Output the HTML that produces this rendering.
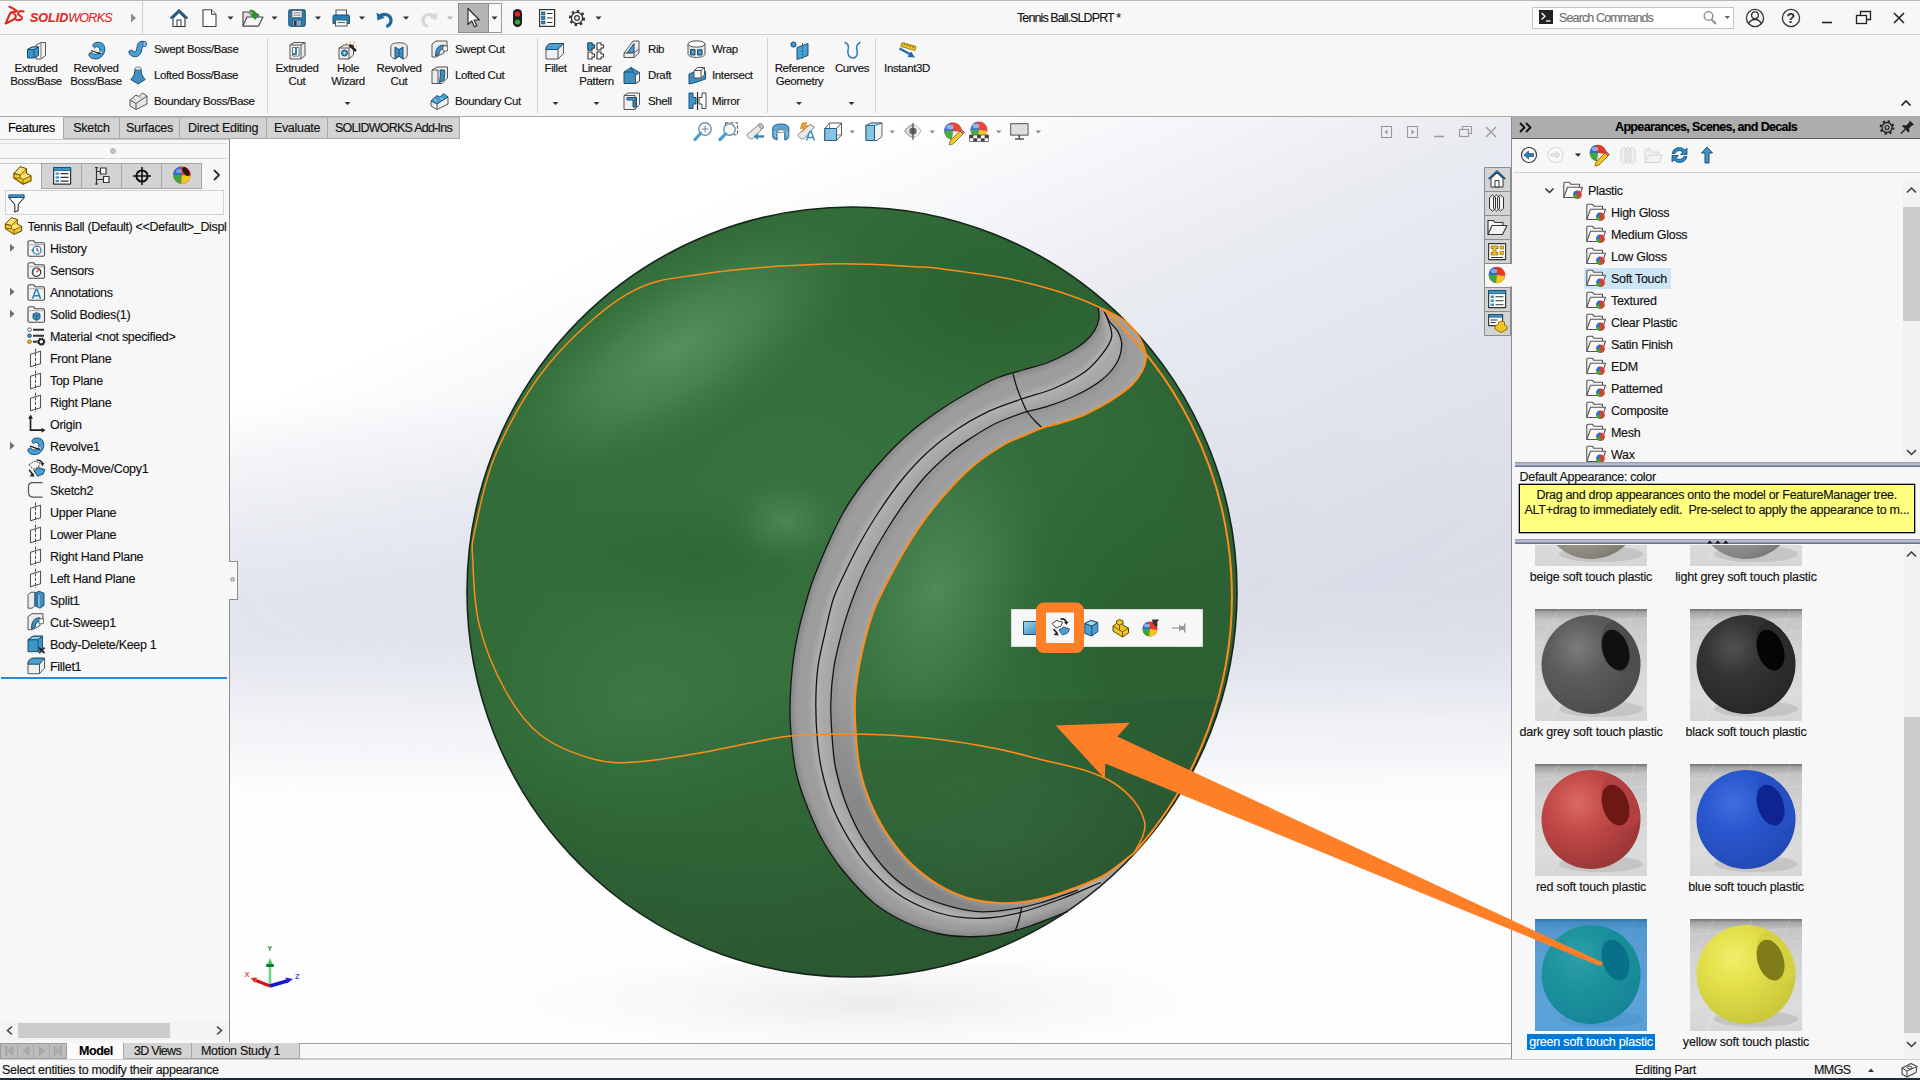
<!DOCTYPE html>
<html lang="en">
<head>
<meta charset="utf-8">
<title>Tennis Ball.SLDPRT - SOLIDWORKS</title>
<style>
*{box-sizing:border-box;margin:0;padding:0}
html,body{width:1920px;height:1080px;overflow:hidden;background:#f7f7f7}
body{position:relative;font-family:"Liberation Sans",sans-serif;font-size:12.5px;letter-spacing:-0.3px;color:#111;-webkit-text-stroke:0.14px currentColor}
.abs{position:absolute}
.t{position:absolute;white-space:pre;line-height:16px;height:16px}
.rb{font-size:11.5px;letter-spacing:-0.38px;color:#111}
.rbc{position:absolute;text-align:center;white-space:pre;line-height:13px;font-size:11.5px;letter-spacing:-0.38px;color:#111;transform:translateX(-50%)}
svg{position:absolute;overflow:visible}
.vsep{position:absolute;width:1px;background:#d4d4d4}
.dd{position:absolute;width:0;height:0;border-left:3px solid transparent;border-right:3px solid transparent;border-top:3px solid #333}
.tab{position:absolute;top:117px;height:22px;background:#d3d3d3;border:1px solid #a8a8a8;border-top:1px solid #b8b8b8;text-align:center;line-height:20px;font-size:12.5px;letter-spacing:-0.3px;color:#111}
.row{position:absolute;left:0;height:22px;width:228px;white-space:pre;line-height:22px}
.row span{position:absolute;top:0}
.tri{position:absolute;width:0;height:0;border-top:4px solid transparent;border-bottom:4px solid transparent;border-left:5px solid #6a6a6a}
</style>
</head>
<body>
<!-- ===== top line ===== -->
<div class="abs" style="left:0;top:0;width:1920px;height:1px;background:#b9b9b9"></div>
<!-- title bar -->
<div class="abs" style="left:0;top:1px;width:1920px;height:34px;background:#f7f7f7;border-bottom:1px solid #d0d0d0"></div>
<div class="abs" style="left:142px;top:1px;width:1px;height:33px;background:#d0d0d0"></div>
<!-- ribbon -->
<div class="abs" style="left:0;top:35px;width:1920px;height:82px;background:#f7f7f7;border-bottom:1px solid #a9a9a9"></div>
<!-- viewport background -->
<div id="vp" class="abs" style="left:230px;top:117px;width:1281px;height:926px;background:
linear-gradient(180deg, rgba(216,220,231,0) 30.5%, rgba(216,220,231,.3) 41%, rgba(216,220,231,.6) 52%, rgba(216,220,231,.6) 56.5%, rgba(216,220,231,.3) 63%, rgba(216,220,231,0) 73%),
#ffffff"></div>
<div class="abs" style="left:230px;top:117px;width:1281px;height:926px;background:linear-gradient(156deg, rgba(216,220,231,0) 20%, rgba(216,220,231,.3) 30%, rgba(216,220,231,.55) 38%, rgba(216,220,231,.72) 49%, rgba(216,220,231,.86) 59%, rgba(216,220,231,.96) 66%, rgba(216,220,231,1) 100%);-webkit-mask-image:linear-gradient(180deg,#000 0%,#000 51%,rgba(0,0,0,.25) 65%,rgba(0,0,0,.06) 74%,rgba(0,0,0,.03) 100%);mask-image:linear-gradient(180deg,#000 0%,#000 51%,rgba(0,0,0,.25) 65%,rgba(0,0,0,.06) 74%,rgba(0,0,0,.03) 100%)"></div>
<!-- floor shadow -->
<div class="abs" style="left:520px;top:965px;width:700px;height:85px;background:radial-gradient(ellipse 50% 60% at 50% 45%,rgba(222,222,226,0.55) 0%,rgba(232,232,236,0.3) 50%,rgba(255,255,255,0) 100%)"></div>
<!-- ===== ball ===== -->
<svg class="abs" style="left:0;top:0" width="1920" height="1080" viewBox="0 0 1920 1080">
<defs>
<radialGradient id="gbase" cx="0.42" cy="0.40" r="0.62"><stop offset="0" stop-color="#38733f"/><stop offset="0.7" stop-color="#316b38"/><stop offset="1" stop-color="#2c5f33"/></radialGradient>
<radialGradient id="h1" cx="0.5" cy="0.5" r="0.5"><stop offset="0" stop-color="#56935f" stop-opacity="0.95"/><stop offset="0.45" stop-color="#4c8956" stop-opacity="0.7"/><stop offset="1" stop-color="#3a7542" stop-opacity="0"/></radialGradient>
<radialGradient id="h2" cx="0.5" cy="0.5" r="0.5"><stop offset="0" stop-color="#4f8b58" stop-opacity="1"/><stop offset="0.5" stop-color="#458050" stop-opacity="0.6"/><stop offset="1" stop-color="#3a7542" stop-opacity="0"/></radialGradient>
<radialGradient id="dk" cx="0.5" cy="0.5" r="0.5"><stop offset="0" stop-color="#2a5f31" stop-opacity="0.9"/><stop offset="1" stop-color="#2a5f31" stop-opacity="0"/></radialGradient>
<linearGradient id="bandg" x1="0" y1="0" x2="1" y2="0"><stop offset="0" stop-color="#a6a6a6"/><stop offset="1" stop-color="#9a9a9a"/></linearGradient>
<clipPath id="ballclip"><circle cx="852" cy="592" r="385"/></clipPath>
</defs>
<circle cx="852" cy="592" r="385" fill="url(#gbase)"/>
<g clip-path="url(#ballclip)">
<ellipse cx="1000" cy="300" rx="200" ry="110" fill="url(#dk)"/>
<ellipse cx="1130" cy="640" rx="130" ry="200" fill="url(#dk)"/>
<ellipse cx="700" cy="560" rx="160" ry="70" fill="url(#dk)" opacity="0.6"/>
<ellipse cx="0" cy="0" rx="215" ry="88" fill="url(#h1)" transform="translate(676 350) rotate(-32)"/>
<ellipse cx="785" cy="521" rx="60" ry="45" fill="url(#h2)" opacity="0.85"/>
<ellipse cx="0" cy="0" rx="105" ry="185" fill="url(#h2)" transform="translate(936 590) rotate(16)"/>
<ellipse cx="640" cy="700" rx="200" ry="150" fill="url(#h2)" opacity="0.35"/>
<ellipse cx="1000" cy="830" rx="170" ry="110" fill="url(#h2)" opacity="0.3"/>
<linearGradient id="botdk" gradientUnits="userSpaceOnUse" x1="700" y1="700" x2="780" y2="980"><stop offset="0" stop-color="#2a5230" stop-opacity="0"/><stop offset="1" stop-color="#2a5230" stop-opacity=".55"/></linearGradient><rect x="460" y="700" width="800" height="290" fill="url(#botdk)"/>
</g>
<defs><clipPath id="bandclip"><path d="M1098.0 306.0C1098.2 308.0 1099.5 314.0 1099.0 318.0C1098.5 322.0 1097.3 326.1 1095.0 330.0C1092.7 333.9 1089.5 337.9 1085.0 341.7C1080.5 345.5 1074.4 349.4 1068.0 353.0C1061.6 356.6 1054.2 360.2 1046.7 363.0C1039.2 365.8 1031.3 367.5 1023.0 370.0C1014.7 372.5 1005.5 374.4 996.7 378.0C987.9 381.6 979.0 386.7 970.0 391.7C961.0 396.7 952.5 401.6 943.0 408.0C933.5 414.4 922.4 422.2 913.0 430.0C903.6 437.8 895.0 446.2 886.7 455.0C878.4 463.8 870.3 473.3 863.0 483.0C855.7 492.7 849.0 502.4 843.0 513.0C837.0 523.6 831.7 535.5 826.7 546.7C821.7 557.9 816.5 570.5 813.0 580.0C809.5 589.5 808.0 595.2 805.5 604.0C803.0 612.8 800.2 622.5 798.0 633.0C795.8 643.5 793.8 654.2 792.5 666.7C791.2 679.2 790.1 695.5 790.0 708.0C789.9 720.5 790.7 731.0 791.7 741.7C792.7 752.4 793.8 762.1 796.0 772.0C798.2 781.9 800.7 789.9 805.0 801.0C809.3 812.1 815.5 827.2 821.7 838.8C828.0 850.2 833.8 859.3 842.5 870.0C851.2 880.7 863.3 894.3 873.8 903.0C884.2 911.7 894.3 916.9 905.0 922.0C915.7 927.1 927.6 931.0 938.0 933.5C948.4 936.0 957.4 936.5 967.5 936.7C977.6 936.9 988.3 936.4 998.8 934.6C1009.2 932.8 1018.5 929.8 1030.0 926.0C1041.5 922.2 1061.2 914.1 1067.5 911.7A385 385 0 0 0 1134.0 853.0L1134.0 853.0C1128.8 856.8 1115.2 869.3 1103.0 876.0C1090.8 882.7 1073.2 888.8 1061.0 893.0C1048.8 897.2 1040.4 899.3 1030.0 901.0C1019.6 902.7 1009.2 903.5 998.8 903.0C988.3 902.5 977.6 901.1 967.5 898.0C957.4 894.9 947.8 890.6 938.0 884.6C928.2 878.6 917.7 870.4 909.0 861.7C900.3 853.0 892.6 842.6 886.0 832.5C879.4 822.4 873.9 811.4 869.6 801.0C865.3 790.6 862.3 781.3 860.0 770.0C857.7 758.7 856.6 744.7 855.8 733.0C855.0 721.3 854.5 711.0 855.0 700.0C855.5 689.0 857.0 677.9 859.0 666.7C861.0 655.5 863.9 643.3 866.7 633.0C869.5 622.7 872.1 614.4 876.0 605.0C879.9 595.6 884.9 586.4 890.0 576.7C895.1 567.0 900.6 556.7 906.7 546.7C912.8 536.7 919.2 526.7 926.7 516.7C934.2 506.7 943.4 495.6 951.7 486.7C960.0 477.8 967.8 470.1 976.7 463.0C985.6 455.9 997.5 448.4 1005.0 444.0C1012.5 439.6 1015.6 439.4 1021.7 436.7C1027.8 434.0 1035.3 430.3 1041.7 428.0C1048.1 425.7 1053.6 424.9 1060.0 423.0C1066.4 421.1 1073.0 419.6 1080.0 416.7C1087.0 413.8 1095.6 409.1 1101.7 405.8C1107.8 402.5 1111.7 400.2 1116.7 396.7C1121.7 393.2 1127.5 389.2 1131.7 385.0C1135.9 380.8 1139.3 376.2 1141.7 371.7C1144.1 367.2 1145.8 362.4 1146.0 358.0C1146.2 353.6 1144.6 349.2 1143.0 345.0C1141.4 340.8 1139.8 337.2 1136.5 333.0C1133.2 328.8 1129.1 324.0 1123.5 320.0C1117.9 316.0 1106.4 310.8 1103.0 309.0Z"/></clipPath><filter id="bl3" x="-20%" y="-20%" width="140%" height="140%"><feGaussianBlur stdDeviation="2.6"/></filter></defs>
<path d="M1098.0 306.0C1098.2 308.0 1099.5 314.0 1099.0 318.0C1098.5 322.0 1097.3 326.1 1095.0 330.0C1092.7 333.9 1089.5 337.9 1085.0 341.7C1080.5 345.5 1074.4 349.4 1068.0 353.0C1061.6 356.6 1054.2 360.2 1046.7 363.0C1039.2 365.8 1031.3 367.5 1023.0 370.0C1014.7 372.5 1005.5 374.4 996.7 378.0C987.9 381.6 979.0 386.7 970.0 391.7C961.0 396.7 952.5 401.6 943.0 408.0C933.5 414.4 922.4 422.2 913.0 430.0C903.6 437.8 895.0 446.2 886.7 455.0C878.4 463.8 870.3 473.3 863.0 483.0C855.7 492.7 849.0 502.4 843.0 513.0C837.0 523.6 831.7 535.5 826.7 546.7C821.7 557.9 816.5 570.5 813.0 580.0C809.5 589.5 808.0 595.2 805.5 604.0C803.0 612.8 800.2 622.5 798.0 633.0C795.8 643.5 793.8 654.2 792.5 666.7C791.2 679.2 790.1 695.5 790.0 708.0C789.9 720.5 790.7 731.0 791.7 741.7C792.7 752.4 793.8 762.1 796.0 772.0C798.2 781.9 800.7 789.9 805.0 801.0C809.3 812.1 815.5 827.2 821.7 838.8C828.0 850.2 833.8 859.3 842.5 870.0C851.2 880.7 863.3 894.3 873.8 903.0C884.2 911.7 894.3 916.9 905.0 922.0C915.7 927.1 927.6 931.0 938.0 933.5C948.4 936.0 957.4 936.5 967.5 936.7C977.6 936.9 988.3 936.4 998.8 934.6C1009.2 932.8 1018.5 929.8 1030.0 926.0C1041.5 922.2 1061.2 914.1 1067.5 911.7A385 385 0 0 0 1134.0 853.0L1134.0 853.0C1128.8 856.8 1115.2 869.3 1103.0 876.0C1090.8 882.7 1073.2 888.8 1061.0 893.0C1048.8 897.2 1040.4 899.3 1030.0 901.0C1019.6 902.7 1009.2 903.5 998.8 903.0C988.3 902.5 977.6 901.1 967.5 898.0C957.4 894.9 947.8 890.6 938.0 884.6C928.2 878.6 917.7 870.4 909.0 861.7C900.3 853.0 892.6 842.6 886.0 832.5C879.4 822.4 873.9 811.4 869.6 801.0C865.3 790.6 862.3 781.3 860.0 770.0C857.7 758.7 856.6 744.7 855.8 733.0C855.0 721.3 854.5 711.0 855.0 700.0C855.5 689.0 857.0 677.9 859.0 666.7C861.0 655.5 863.9 643.3 866.7 633.0C869.5 622.7 872.1 614.4 876.0 605.0C879.9 595.6 884.9 586.4 890.0 576.7C895.1 567.0 900.6 556.7 906.7 546.7C912.8 536.7 919.2 526.7 926.7 516.7C934.2 506.7 943.4 495.6 951.7 486.7C960.0 477.8 967.8 470.1 976.7 463.0C985.6 455.9 997.5 448.4 1005.0 444.0C1012.5 439.6 1015.6 439.4 1021.7 436.7C1027.8 434.0 1035.3 430.3 1041.7 428.0C1048.1 425.7 1053.6 424.9 1060.0 423.0C1066.4 421.1 1073.0 419.6 1080.0 416.7C1087.0 413.8 1095.6 409.1 1101.7 405.8C1107.8 402.5 1111.7 400.2 1116.7 396.7C1121.7 393.2 1127.5 389.2 1131.7 385.0C1135.9 380.8 1139.3 376.2 1141.7 371.7C1144.1 367.2 1145.8 362.4 1146.0 358.0C1146.2 353.6 1144.6 349.2 1143.0 345.0C1141.4 340.8 1139.8 337.2 1136.5 333.0C1133.2 328.8 1129.1 324.0 1123.5 320.0C1117.9 316.0 1106.4 310.8 1103.0 309.0Z" fill="#9d9d9d"/>
<g clip-path="url(#bandclip)">
<path d="M1104.0 311.0C1104.7 312.5 1106.7 315.7 1108.0 320.0C1109.3 324.3 1112.5 331.2 1111.7 336.7C1110.9 342.2 1107.5 347.2 1103.0 353.0C1098.5 358.8 1093.0 365.9 1085.0 371.7C1077.0 377.5 1065.5 383.4 1055.0 388.0C1044.5 392.6 1032.9 395.1 1021.7 399.0C1010.5 402.9 999.0 406.5 988.0 411.7C977.0 416.9 966.0 423.1 955.8 430.0C945.6 436.9 935.7 444.7 926.7 453.0C917.7 461.3 909.5 470.5 901.7 480.0C893.9 489.5 887.0 499.5 880.0 510.0C873.0 520.5 866.2 531.9 860.0 543.0C853.8 554.1 847.5 567.2 843.0 576.7C838.5 586.2 836.0 590.6 833.0 600.0C830.0 609.4 827.5 621.9 825.0 633.0C822.5 644.1 819.5 655.0 818.0 666.7C816.5 678.4 815.9 690.5 815.8 703.0C815.7 715.5 816.5 730.5 817.5 741.7C818.5 752.9 819.3 759.4 821.7 770.0C824.1 780.6 827.5 793.9 832.0 805.4C836.5 816.9 842.5 828.3 848.8 838.8C855.0 849.2 861.6 859.0 869.6 868.0C877.6 877.0 887.3 886.2 896.7 893.0C906.1 899.8 915.8 904.5 925.8 908.5C935.8 912.5 946.6 915.3 957.0 916.9C967.4 918.5 977.6 918.7 988.0 918.0C998.4 917.3 1007.4 915.9 1019.6 912.7C1031.8 909.5 1047.5 904.0 1061.0 899.0C1074.5 894.0 1094.2 885.2 1100.8 882.5L1078.0 890.0C1071.7 892.2 1051.5 899.7 1040.0 903.0C1028.5 906.3 1019.3 908.1 1009.0 909.6C998.7 911.1 988.4 912.4 978.0 911.7C967.6 911.0 957.1 908.5 946.7 905.4C936.3 902.3 925.2 898.6 915.4 893.0C905.6 887.4 896.7 881.0 888.0 872.0C879.3 863.0 869.9 849.9 863.0 838.8C856.1 827.6 851.2 816.9 846.7 805.4C842.2 793.9 838.4 780.6 836.0 770.0C833.6 759.4 833.4 752.9 832.5 741.7C831.6 730.5 830.5 715.5 830.8 703.0C831.0 690.5 832.2 678.4 834.0 666.7C835.8 655.0 839.4 642.1 841.7 633.0C844.0 623.9 845.6 619.2 848.0 612.0C850.4 604.8 852.7 598.2 856.0 590.0C859.3 581.8 862.9 573.0 868.0 563.0C873.1 553.0 880.2 540.5 886.7 530.0C893.2 519.5 900.0 509.2 906.7 500.0C913.4 490.8 919.2 483.1 926.7 475.0C934.2 466.9 944.0 458.1 951.7 451.7C959.4 445.3 965.5 441.5 973.0 436.7C980.5 431.9 987.8 427.2 996.7 423.0C1005.7 418.8 1018.4 414.4 1026.7 411.7C1035.0 409.0 1038.4 409.5 1046.7 406.7C1055.0 403.9 1067.5 399.4 1076.7 395.0C1085.9 390.6 1095.0 385.3 1101.7 380.0C1108.4 374.7 1113.4 368.8 1116.7 363.0C1120.0 357.2 1121.5 350.2 1121.7 345.0C1121.9 339.8 1120.1 335.7 1118.0 331.7C1115.9 327.7 1111.2 324.3 1109.0 321.0C1106.8 317.7 1105.7 313.5 1105.0 312.0Z" fill="#a8a8a8"/>
<linearGradient id="bish" gradientUnits="userSpaceOnUse" x1="0" y1="680" x2="0" y2="900"><stop offset="0" stop-color="#6e6e6e" stop-opacity="0"/><stop offset=".55" stop-color="#6e6e6e" stop-opacity=".45"/><stop offset="1" stop-color="#707070" stop-opacity=".55"/></linearGradient>
<path d="M1105.0 312.0C1105.7 313.5 1106.8 317.7 1109.0 321.0C1111.2 324.3 1115.9 327.7 1118.0 331.7C1120.1 335.7 1121.9 339.8 1121.7 345.0C1121.5 350.2 1120.0 357.2 1116.7 363.0C1113.4 368.8 1108.4 374.7 1101.7 380.0C1095.0 385.3 1085.9 390.6 1076.7 395.0C1067.5 399.4 1055.0 403.9 1046.7 406.7C1038.4 409.5 1035.0 409.0 1026.7 411.7C1018.4 414.4 1005.7 418.8 996.7 423.0C987.8 427.2 980.5 431.9 973.0 436.7C965.5 441.5 959.4 445.3 951.7 451.7C944.0 458.1 934.2 466.9 926.7 475.0C919.2 483.1 913.4 490.8 906.7 500.0C900.0 509.2 893.2 519.5 886.7 530.0C880.2 540.5 873.1 553.0 868.0 563.0C862.9 573.0 859.3 581.8 856.0 590.0C852.7 598.2 850.4 604.8 848.0 612.0C845.6 619.2 844.0 623.9 841.7 633.0C839.4 642.1 835.8 655.0 834.0 666.7C832.2 678.4 831.0 690.5 830.8 703.0C830.5 715.5 831.6 730.5 832.5 741.7C833.4 752.9 833.6 759.4 836.0 770.0C838.4 780.6 842.2 793.9 846.7 805.4C851.2 816.9 856.1 827.6 863.0 838.8C869.9 849.9 879.3 863.0 888.0 872.0C896.7 881.0 905.6 887.4 915.4 893.0C925.2 898.6 936.3 902.3 946.7 905.4C957.1 908.5 967.6 911.0 978.0 911.7C988.4 912.4 998.7 911.1 1009.0 909.6C1019.3 908.1 1028.5 906.3 1040.0 903.0C1051.5 899.7 1071.7 892.2 1078.0 890.0L1134.0 853.0C1128.8 856.8 1115.2 869.3 1103.0 876.0C1090.8 882.7 1073.2 888.8 1061.0 893.0C1048.8 897.2 1040.4 899.3 1030.0 901.0C1019.6 902.7 1009.2 903.5 998.8 903.0C988.3 902.5 977.6 901.1 967.5 898.0C957.4 894.9 947.8 890.6 938.0 884.6C928.2 878.6 917.7 870.4 909.0 861.7C900.3 853.0 892.6 842.6 886.0 832.5C879.4 822.4 873.9 811.4 869.6 801.0C865.3 790.6 862.3 781.3 860.0 770.0C857.7 758.7 856.6 744.7 855.8 733.0C855.0 721.3 854.5 711.0 855.0 700.0C855.5 689.0 857.0 677.9 859.0 666.7C861.0 655.5 863.9 643.3 866.7 633.0C869.5 622.7 872.1 614.4 876.0 605.0C879.9 595.6 884.9 586.4 890.0 576.7C895.1 567.0 900.6 556.7 906.7 546.7C912.8 536.7 919.2 526.7 926.7 516.7C934.2 506.7 943.4 495.6 951.7 486.7C960.0 477.8 967.8 470.1 976.7 463.0C985.6 455.9 997.5 448.4 1005.0 444.0C1012.5 439.6 1015.6 439.4 1021.7 436.7C1027.8 434.0 1035.3 430.3 1041.7 428.0C1048.1 425.7 1053.6 424.9 1060.0 423.0C1066.4 421.1 1073.0 419.6 1080.0 416.7C1087.0 413.8 1095.6 409.1 1101.7 405.8C1107.8 402.5 1111.7 400.2 1116.7 396.7C1121.7 393.2 1127.5 389.2 1131.7 385.0C1135.9 380.8 1139.3 376.2 1141.7 371.7C1144.1 367.2 1145.8 362.4 1146.0 358.0C1146.2 353.6 1144.6 349.2 1143.0 345.0C1141.4 340.8 1139.8 337.2 1136.5 333.0C1133.2 328.8 1129.1 324.0 1123.5 320.0C1117.9 316.0 1106.4 310.8 1103.0 309.0Z" fill="url(#bish)"/>
<g filter="url(#bl3)" fill="none">
<path d="M1104.0 311.0C1104.7 312.5 1106.7 315.7 1108.0 320.0C1109.3 324.3 1112.5 331.2 1111.7 336.7C1110.9 342.2 1107.5 347.2 1103.0 353.0C1098.5 358.8 1093.0 365.9 1085.0 371.7C1077.0 377.5 1065.5 383.4 1055.0 388.0C1044.5 392.6 1032.9 395.1 1021.7 399.0C1010.5 402.9 999.0 406.5 988.0 411.7C977.0 416.9 966.0 423.1 955.8 430.0C945.6 436.9 935.7 444.7 926.7 453.0C917.7 461.3 909.5 470.5 901.7 480.0C893.9 489.5 887.0 499.5 880.0 510.0C873.0 520.5 866.2 531.9 860.0 543.0C853.8 554.1 847.5 567.2 843.0 576.7C838.5 586.2 836.0 590.6 833.0 600.0C830.0 609.4 827.5 621.9 825.0 633.0C822.5 644.1 819.5 655.0 818.0 666.7C816.5 678.4 815.9 690.5 815.8 703.0C815.7 715.5 816.5 730.5 817.5 741.7C818.5 752.9 819.3 759.4 821.7 770.0C824.1 780.6 827.5 793.9 832.0 805.4C836.5 816.9 842.5 828.3 848.8 838.8C855.0 849.2 861.6 859.0 869.6 868.0C877.6 877.0 887.3 886.2 896.7 893.0C906.1 899.8 915.8 904.5 925.8 908.5C935.8 912.5 946.6 915.3 957.0 916.9C967.4 918.5 977.6 918.7 988.0 918.0C998.4 917.3 1007.4 915.9 1019.6 912.7C1031.8 909.5 1047.5 904.0 1061.0 899.0C1074.5 894.0 1094.2 885.2 1100.8 882.5" stroke="#b4b4b4" stroke-width="9" opacity=".8"/>
<path d="M1098.0 306.0C1098.2 308.0 1099.5 314.0 1099.0 318.0C1098.5 322.0 1097.3 326.1 1095.0 330.0C1092.7 333.9 1089.5 337.9 1085.0 341.7C1080.5 345.5 1074.4 349.4 1068.0 353.0C1061.6 356.6 1054.2 360.2 1046.7 363.0C1039.2 365.8 1031.3 367.5 1023.0 370.0C1014.7 372.5 1005.5 374.4 996.7 378.0C987.9 381.6 979.0 386.7 970.0 391.7C961.0 396.7 952.5 401.6 943.0 408.0C933.5 414.4 922.4 422.2 913.0 430.0C903.6 437.8 895.0 446.2 886.7 455.0C878.4 463.8 870.3 473.3 863.0 483.0C855.7 492.7 849.0 502.4 843.0 513.0C837.0 523.6 831.7 535.5 826.7 546.7C821.7 557.9 816.5 570.5 813.0 580.0C809.5 589.5 808.0 595.2 805.5 604.0C803.0 612.8 800.2 622.5 798.0 633.0C795.8 643.5 793.8 654.2 792.5 666.7C791.2 679.2 790.1 695.5 790.0 708.0C789.9 720.5 790.7 731.0 791.7 741.7C792.7 752.4 793.8 762.1 796.0 772.0C798.2 781.9 800.7 789.9 805.0 801.0C809.3 812.1 815.5 827.2 821.7 838.8C828.0 850.2 833.8 859.3 842.5 870.0C851.2 880.7 863.3 894.3 873.8 903.0C884.2 911.7 894.3 916.9 905.0 922.0C915.7 927.1 927.6 931.0 938.0 933.5C948.4 936.0 957.4 936.5 967.5 936.7C977.6 936.9 988.3 936.4 998.8 934.6C1009.2 932.8 1018.5 929.8 1030.0 926.0C1041.5 922.2 1061.2 914.1 1067.5 911.7" stroke="#808080" stroke-width="8" opacity=".75"/>
<path d="M1105.0 312.0C1105.7 313.5 1106.8 317.7 1109.0 321.0C1111.2 324.3 1115.9 327.7 1118.0 331.7C1120.1 335.7 1121.9 339.8 1121.7 345.0C1121.5 350.2 1120.0 357.2 1116.7 363.0C1113.4 368.8 1108.4 374.7 1101.7 380.0C1095.0 385.3 1085.9 390.6 1076.7 395.0C1067.5 399.4 1055.0 403.9 1046.7 406.7C1038.4 409.5 1035.0 409.0 1026.7 411.7C1018.4 414.4 1005.7 418.8 996.7 423.0C987.8 427.2 980.5 431.9 973.0 436.7C965.5 441.5 959.4 445.3 951.7 451.7C944.0 458.1 934.2 466.9 926.7 475.0C919.2 483.1 913.4 490.8 906.7 500.0C900.0 509.2 893.2 519.5 886.7 530.0C880.2 540.5 873.1 553.0 868.0 563.0C862.9 573.0 859.3 581.8 856.0 590.0C852.7 598.2 850.4 604.8 848.0 612.0C845.6 619.2 844.0 623.9 841.7 633.0C839.4 642.1 835.8 655.0 834.0 666.7C832.2 678.4 831.0 690.5 830.8 703.0C830.5 715.5 831.6 730.5 832.5 741.7C833.4 752.9 833.6 759.4 836.0 770.0C838.4 780.6 842.2 793.9 846.7 805.4C851.2 816.9 856.1 827.6 863.0 838.8C869.9 849.9 879.3 863.0 888.0 872.0C896.7 881.0 905.6 887.4 915.4 893.0C925.2 898.6 936.3 902.3 946.7 905.4C957.1 908.5 967.6 911.0 978.0 911.7C988.4 912.4 998.7 911.1 1009.0 909.6C1019.3 908.1 1028.5 906.3 1040.0 903.0C1051.5 899.7 1071.7 892.2 1078.0 890.0" stroke="#8a8a8a" stroke-width="5" opacity=".6" transform="translate(3 1)"/>
<path d="M1103.0 309.0C1106.4 310.8 1117.9 316.0 1123.5 320.0C1129.1 324.0 1133.2 328.8 1136.5 333.0C1139.8 337.2 1141.4 340.8 1143.0 345.0C1144.6 349.2 1146.2 353.6 1146.0 358.0C1145.8 362.4 1144.1 367.2 1141.7 371.7C1139.3 376.2 1135.9 380.8 1131.7 385.0C1127.5 389.2 1121.7 393.2 1116.7 396.7C1111.7 400.2 1107.8 402.5 1101.7 405.8C1095.6 409.1 1087.0 413.8 1080.0 416.7C1073.0 419.6 1066.4 421.1 1060.0 423.0C1053.6 424.9 1048.1 425.7 1041.7 428.0C1035.3 430.3 1027.8 434.0 1021.7 436.7C1015.6 439.4 1012.5 439.6 1005.0 444.0C997.5 448.4 985.6 455.9 976.7 463.0C967.8 470.1 960.0 477.8 951.7 486.7C943.4 495.6 934.2 506.7 926.7 516.7C919.2 526.7 912.8 536.7 906.7 546.7C900.6 556.7 895.1 567.0 890.0 576.7C884.9 586.4 879.9 595.6 876.0 605.0C872.1 614.4 869.5 622.7 866.7 633.0C863.9 643.3 861.0 655.5 859.0 666.7C857.0 677.9 855.5 689.0 855.0 700.0C854.5 711.0 855.0 721.3 855.8 733.0C856.6 744.7 857.7 758.7 860.0 770.0C862.3 781.3 865.3 790.6 869.6 801.0C873.9 811.4 879.4 822.4 886.0 832.5C892.6 842.6 900.3 853.0 909.0 861.7C917.7 870.4 928.2 878.6 938.0 884.6C947.8 890.6 957.4 894.9 967.5 898.0C977.6 901.1 988.3 902.5 998.8 903.0C1009.2 903.5 1019.6 902.7 1030.0 901.0C1040.4 899.3 1048.8 897.2 1061.0 893.0C1073.2 888.8 1090.8 882.7 1103.0 876.0C1115.2 869.3 1128.8 856.8 1134.0 853.0" stroke="#b0b0b0" stroke-width="5" opacity=".6"/>
</g></g>
<circle cx="852" cy="592" r="385" fill="none" stroke="#16241a" stroke-width="1.6"/>
<path d="M1098.0 306.0C1098.2 308.0 1099.5 314.0 1099.0 318.0C1098.5 322.0 1097.3 326.1 1095.0 330.0C1092.7 333.9 1089.5 337.9 1085.0 341.7C1080.5 345.5 1074.4 349.4 1068.0 353.0C1061.6 356.6 1054.2 360.2 1046.7 363.0C1039.2 365.8 1031.3 367.5 1023.0 370.0C1014.7 372.5 1005.5 374.4 996.7 378.0C987.9 381.6 979.0 386.7 970.0 391.7C961.0 396.7 952.5 401.6 943.0 408.0C933.5 414.4 922.4 422.2 913.0 430.0C903.6 437.8 895.0 446.2 886.7 455.0C878.4 463.8 870.3 473.3 863.0 483.0C855.7 492.7 849.0 502.4 843.0 513.0C837.0 523.6 831.7 535.5 826.7 546.7C821.7 557.9 816.5 570.5 813.0 580.0C809.5 589.5 808.0 595.2 805.5 604.0C803.0 612.8 800.2 622.5 798.0 633.0C795.8 643.5 793.8 654.2 792.5 666.7C791.2 679.2 790.1 695.5 790.0 708.0C789.9 720.5 790.7 731.0 791.7 741.7C792.7 752.4 793.8 762.1 796.0 772.0C798.2 781.9 800.7 789.9 805.0 801.0C809.3 812.1 815.5 827.2 821.7 838.8C828.0 850.2 833.8 859.3 842.5 870.0C851.2 880.7 863.3 894.3 873.8 903.0C884.2 911.7 894.3 916.9 905.0 922.0C915.7 927.1 927.6 931.0 938.0 933.5C948.4 936.0 957.4 936.5 967.5 936.7C977.6 936.9 988.3 936.4 998.8 934.6C1009.2 932.8 1018.5 929.8 1030.0 926.0C1041.5 922.2 1061.2 914.1 1067.5 911.7" fill="none" stroke="#141414" stroke-width="1.3"/>
<path d="M1104.0 311.0C1104.7 312.5 1106.7 315.7 1108.0 320.0C1109.3 324.3 1112.5 331.2 1111.7 336.7C1110.9 342.2 1107.5 347.2 1103.0 353.0C1098.5 358.8 1093.0 365.9 1085.0 371.7C1077.0 377.5 1065.5 383.4 1055.0 388.0C1044.5 392.6 1032.9 395.1 1021.7 399.0C1010.5 402.9 999.0 406.5 988.0 411.7C977.0 416.9 966.0 423.1 955.8 430.0C945.6 436.9 935.7 444.7 926.7 453.0C917.7 461.3 909.5 470.5 901.7 480.0C893.9 489.5 887.0 499.5 880.0 510.0C873.0 520.5 866.2 531.9 860.0 543.0C853.8 554.1 847.5 567.2 843.0 576.7C838.5 586.2 836.0 590.6 833.0 600.0C830.0 609.4 827.5 621.9 825.0 633.0C822.5 644.1 819.5 655.0 818.0 666.7C816.5 678.4 815.9 690.5 815.8 703.0C815.7 715.5 816.5 730.5 817.5 741.7C818.5 752.9 819.3 759.4 821.7 770.0C824.1 780.6 827.5 793.9 832.0 805.4C836.5 816.9 842.5 828.3 848.8 838.8C855.0 849.2 861.6 859.0 869.6 868.0C877.6 877.0 887.3 886.2 896.7 893.0C906.1 899.8 915.8 904.5 925.8 908.5C935.8 912.5 946.6 915.3 957.0 916.9C967.4 918.5 977.6 918.7 988.0 918.0C998.4 917.3 1007.4 915.9 1019.6 912.7C1031.8 909.5 1047.5 904.0 1061.0 899.0C1074.5 894.0 1094.2 885.2 1100.8 882.5" fill="none" stroke="#141414" stroke-width="1.3"/>
<path d="M1105.0 312.0C1105.7 313.5 1106.8 317.7 1109.0 321.0C1111.2 324.3 1115.9 327.7 1118.0 331.7C1120.1 335.7 1121.9 339.8 1121.7 345.0C1121.5 350.2 1120.0 357.2 1116.7 363.0C1113.4 368.8 1108.4 374.7 1101.7 380.0C1095.0 385.3 1085.9 390.6 1076.7 395.0C1067.5 399.4 1055.0 403.9 1046.7 406.7C1038.4 409.5 1035.0 409.0 1026.7 411.7C1018.4 414.4 1005.7 418.8 996.7 423.0C987.8 427.2 980.5 431.9 973.0 436.7C965.5 441.5 959.4 445.3 951.7 451.7C944.0 458.1 934.2 466.9 926.7 475.0C919.2 483.1 913.4 490.8 906.7 500.0C900.0 509.2 893.2 519.5 886.7 530.0C880.2 540.5 873.1 553.0 868.0 563.0C862.9 573.0 859.3 581.8 856.0 590.0C852.7 598.2 850.4 604.8 848.0 612.0C845.6 619.2 844.0 623.9 841.7 633.0C839.4 642.1 835.8 655.0 834.0 666.7C832.2 678.4 831.0 690.5 830.8 703.0C830.5 715.5 831.6 730.5 832.5 741.7C833.4 752.9 833.6 759.4 836.0 770.0C838.4 780.6 842.2 793.9 846.7 805.4C851.2 816.9 856.1 827.6 863.0 838.8C869.9 849.9 879.3 863.0 888.0 872.0C896.7 881.0 905.6 887.4 915.4 893.0C925.2 898.6 936.3 902.3 946.7 905.4C957.1 908.5 967.6 911.0 978.0 911.7C988.4 912.4 998.7 911.1 1009.0 909.6C1019.3 908.1 1028.5 906.3 1040.0 903.0C1051.5 899.7 1071.7 892.2 1078.0 890.0" fill="none" stroke="#141414" stroke-width="1.3"/>
<path d="M1013.0 374.0C1013.7 376.3 1015.5 383.7 1017.0 388.0C1018.5 392.3 1020.1 396.2 1021.7 400.0C1023.3 403.8 1024.7 407.7 1026.7 411.0C1028.8 414.3 1031.5 417.2 1034.0 420.0C1036.5 422.8 1040.4 426.2 1041.7 427.5" fill="none" stroke="#141414" stroke-width="1.3"/>
<path d="M1021.7 907.5C1021.2 909.6 1020.0 916.2 1019.0 920.0C1018.0 923.8 1016.0 928.7 1015.4 930.4" fill="none" stroke="#141414" stroke-width="1.3"/>
<path d="M1103.0 309.0C1099.2 307.3 1089.4 302.5 1080.0 299.0C1070.6 295.5 1059.2 291.5 1046.7 288.0C1034.2 284.5 1021.1 281.0 1005.0 278.0C988.9 275.0 964.0 271.8 950.0 270.0C936.0 268.2 941.8 268.0 921.0 267.0C900.2 266.0 861.4 262.8 825.0 264.0C788.6 265.2 735.3 269.1 702.5 274.0C669.7 278.9 653.6 278.8 628.0 293.7C602.4 308.6 570.8 337.5 549.0 363.7C527.2 389.9 509.3 423.3 497.0 451.0C484.7 478.7 479.0 511.8 475.0 530.0C471.0 548.2 472.1 544.1 472.8 560.0C473.5 575.9 473.9 603.8 479.4 625.6C484.9 647.4 495.4 672.8 505.6 691.0C515.8 709.2 526.0 723.7 540.6 735.0C555.2 746.3 576.9 754.5 593.0 759.0C609.1 763.5 618.8 763.1 637.0 762.0C655.2 760.9 682.0 756.0 702.5 752.5C723.0 749.0 744.9 743.8 760.0 741.0C775.1 738.2 777.2 737.0 793.0 735.8C808.8 734.6 832.7 733.6 855.0 734.0C877.3 734.4 903.7 735.7 926.7 738.0C949.7 740.3 973.6 744.3 993.0 748.0C1012.4 751.7 1027.8 756.3 1043.0 760.0C1058.2 763.7 1072.3 766.2 1084.0 770.0C1095.7 773.8 1104.7 777.3 1113.0 782.5C1121.3 787.7 1128.7 794.4 1134.0 801.0C1139.3 807.6 1143.2 816.0 1144.6 822.0C1146.0 828.0 1144.3 831.5 1142.5 836.7C1140.7 841.9 1135.4 850.3 1134.0 853.0" fill="none" stroke="#ff8c1a" stroke-width="1.5"/>
<path d="M1103.0 309.0C1106.4 310.8 1117.9 316.0 1123.5 320.0C1129.1 324.0 1133.2 328.8 1136.5 333.0C1139.8 337.2 1141.4 340.8 1143.0 345.0C1144.6 349.2 1146.2 353.6 1146.0 358.0C1145.8 362.4 1144.1 367.2 1141.7 371.7C1139.3 376.2 1135.9 380.8 1131.7 385.0C1127.5 389.2 1121.7 393.2 1116.7 396.7C1111.7 400.2 1107.8 402.5 1101.7 405.8C1095.6 409.1 1087.0 413.8 1080.0 416.7C1073.0 419.6 1066.4 421.1 1060.0 423.0C1053.6 424.9 1048.1 425.7 1041.7 428.0C1035.3 430.3 1027.8 434.0 1021.7 436.7C1015.6 439.4 1012.5 439.6 1005.0 444.0C997.5 448.4 985.6 455.9 976.7 463.0C967.8 470.1 960.0 477.8 951.7 486.7C943.4 495.6 934.2 506.7 926.7 516.7C919.2 526.7 912.8 536.7 906.7 546.7C900.6 556.7 895.1 567.0 890.0 576.7C884.9 586.4 879.9 595.6 876.0 605.0C872.1 614.4 869.5 622.7 866.7 633.0C863.9 643.3 861.0 655.5 859.0 666.7C857.0 677.9 855.5 689.0 855.0 700.0C854.5 711.0 855.0 721.3 855.8 733.0C856.6 744.7 857.7 758.7 860.0 770.0C862.3 781.3 865.3 790.6 869.6 801.0C873.9 811.4 879.4 822.4 886.0 832.5C892.6 842.6 900.3 853.0 909.0 861.7C917.7 870.4 928.2 878.6 938.0 884.6C947.8 890.6 957.4 894.9 967.5 898.0C977.6 901.1 988.3 902.5 998.8 903.0C1009.2 903.5 1019.6 902.7 1030.0 901.0C1040.4 899.3 1048.8 897.2 1061.0 893.0C1073.2 888.8 1090.8 882.7 1103.0 876.0C1115.2 869.3 1128.8 856.8 1134.0 853.0" fill="none" stroke="#ff8c1a" stroke-width="2"/>
<path d="M1103 309A385 385 0 0 1 1134 853" fill="none" stroke="#ff8c1a" stroke-width="2"/>
</svg>
<!-- ===== title bar content ===== -->
<svg style="left:0;top:0" width="1920" height="36" viewBox="0 0 1920 36">
<!-- DS logo -->
<g fill="none" stroke="#dc2a1f" stroke-width="2.1" stroke-linecap="round" stroke-linejoin="round">
<path d="M9.5 6.8c2.6 1.2 5.6 2.4 7.4 4.2-1.6 0.8-3.6 1.2-5.6 1.4 2.8 0.8 5.2 2.4 4.4 4.8-1 2.6-5.8 4.6-10 6.2 1.4-3.2 3-7 4.6-10.4"/>
<path d="M23.6 11.4c-2.4-0.8-5.2 0-5.6 2 -0.4 2.2 4.4 2.2 4 4.6-0.4 2-3.6 2.6-6 1.6"/>
</g>
<!-- arrow -->
<path d="M131 13.5l5 4.5-5 4.5z" fill="#8a8a8a"/>
<!-- home -->
<g transform="translate(170 9)"><path d="M0.5 9.5L9 1.2l8.5 8.3" fill="none" stroke="#1f5f8f" stroke-width="2.2" stroke-linejoin="round"/><path d="M3 9v8.5h12V9L9 3.4z" fill="#fff" stroke="#333" stroke-width="1.1"/><rect x="7" y="11" width="4" height="6.5" fill="#fff" stroke="#333"/></g>
<!-- new -->
<g transform="translate(202 9)"><path d="M1 .8h8.5L14 5.3V17.5H1z" fill="#fdfdfd" stroke="#444" stroke-width="1.1" stroke-linejoin="round"/><path d="M9.5.8v4.5H14" fill="#e8e8e8" stroke="#444" stroke-width="1"/></g>
<!-- open -->
<g transform="translate(242 8)"><path d="M1 4h6l1.5 2H16v12H1z" fill="#e0e0e0" stroke="#444" stroke-width="1.1" stroke-linejoin="round"/><path d="M1 18L5 9h16l-4.5 9z" fill="#f6f6f6" stroke="#444" stroke-width="1.1" stroke-linejoin="round"/><path d="M8 2c4 0 6 1.5 6.5 5h2.5l-4 4.5-4-4.500h2.5c-.3-2-1.500-3-3.500-3.500z" fill="#2e9a2e" stroke="#1b6e1b" stroke-width=".6"/></g>
<!-- save -->
<g transform="translate(288 9)"><path d="M.8 2.300c0-1 .6-1.500 1.500-1.500h13.400c1 0 1.500.6 1.500 1.500v13.400c0 1-.6 1.500-1.500 1.500H2.300L.8 15.700z" fill="#2a7fb5" stroke="#1a4e75" stroke-width="1.100"/><rect x="4" y="1.500" width="10" height="7" fill="#f4f4f4" stroke="#555" stroke-width=".7"/><path d="M5.500 3.500h7M5.500 5h7M5.500 6.500h7" stroke="#888" stroke-width=".7"/><rect x="4.500" y="11" width="9" height="6" fill="#8aa8bb" stroke="#1a4e75" stroke-width=".7"/><rect x="6" y="12" width="2.500" height="4.500" fill="#333"/></g>
<!-- print -->
<g transform="translate(332 9)"><rect x="4" y="1" width="10.500" height="6" fill="#fafafa" stroke="#555" stroke-width="1"/><path d="M1 7.500c0-1 .6-1.500 1.500-1.500h13.500c1 0 1.500.6 1.500 1.500v7H1z" fill="#2a7fb5" stroke="#1a4e75" stroke-width="1"/><rect x="3.500" y="11" width="11.500" height="6" fill="#fafafa" stroke="#555" stroke-width="1"/><path d="M5.500 13.500h7.500" stroke="#2a7fb5" stroke-width="1.200"/></g>
<!-- undo -->
<g transform="translate(376 9)"><path d="M4.500 6.500c5-2.500 10.500-.5 10.500 5 0 2.500-1.500 4.500-3.500 5.500" fill="none" stroke="#1f6aa0" stroke-width="3.200" stroke-linecap="round"/><path d="M.5 3.500l1 8 7.500-3z" fill="#1f6aa0"/></g>
<!-- redo (disabled) -->
<g transform="translate(420 9)" opacity=".55"><path d="M13.500 6.500c-5-2.500-10.500-.5-10.500 5 0 2.500 1.500 4.500 3.500 5.500" fill="none" stroke="#bdbdbd" stroke-width="3.200" stroke-linecap="round"/><path d="M17.500 3.500l-1 8-7.500-3z" fill="#bdbdbd"/></g>
<!-- select -->
<rect x="458.500" y="3.500" width="43" height="29" fill="#f7f7f7" stroke="#9a9a9a"/>
<rect x="458.500" y="3.500" width="30" height="29" fill="#b4b4b4" stroke="#8e8e8e"/>
<path d="M468 8.500v16l3.800-3.600 2.700 5.800 2.300-1-2.700-5.700h5.200z" fill="#fff" stroke="#222" stroke-width="1.100" stroke-linejoin="round"/>
<!-- traffic light -->
<g transform="translate(512 9)"><rect x="1" y="0" width="9" height="18" rx="4.500" fill="#1d1d1d"/><circle cx="5.500" cy="5" r="2.600" fill="#e02a1e"/><circle cx="5.500" cy="13" r="2.600" fill="#2fae2f"/></g>
<!-- options list -->
<g transform="translate(539 9)"><rect x=".6" y=".6" width="15" height="16.800" fill="#fff" stroke="#333" stroke-width="1.200"/><rect x="2.500" y="3" width="3.500" height="3" fill="#2a7fb5" stroke="#1a4e75" stroke-width=".6"/><rect x="2.500" y="7.500" width="3.500" height="3" fill="#2a7fb5" stroke="#1a4e75" stroke-width=".6"/><rect x="2.500" y="12" width="3.500" height="3" fill="#2a7fb5" stroke="#1a4e75" stroke-width=".6"/><path d="M8 4.500h5.500M8 9h5.500M8 13.500h5.500" stroke="#333" stroke-width="1.200"/></g>
<!-- gear -->
<g transform="translate(577 18)" fill="none" stroke="#333"><circle r="5.600" stroke-width="1.300"/><circle r="2.400" stroke-width="1.200"/><g stroke-width="3" stroke-dasharray="2.600 2.900"><circle r="7.100" stroke-width="2"/></g></g>
<!-- dropdown arrows -->
<g fill="#333"><path d="M227.500 16.500h6l-3 3.200zM271.500 16.500h6l-3 3.200zM315 16.500h6l-3 3.200zM359 16.500h6l-3 3.200zM403 16.500h6l-3 3.200zM491.500 16.500h6l-3 3.200zM595.500 16.500h6l-3 3.200z"/><path d="M447 16.500h6l-3 3.200z" fill="#b5b5b5"/></g>
<!-- search box -->
<rect x="1532.500" y="7.500" width="201" height="21" fill="#fff" stroke="#c4c4c4"/>
<rect x="1539" y="10" width="14" height="14" fill="#222"/><path d="M1541.500 13l3.500 3.200-3.500 3.200" fill="none" stroke="#fff" stroke-width="1.300"/><path d="M1546 21h4.500" stroke="#fff" stroke-width="1.300"/>
<circle cx="1708.500" cy="16" r="4.300" fill="none" stroke="#888" stroke-width="1.300"/><path d="M1711.500 19.500l4.500 4.500" stroke="#888" stroke-width="1.800"/>
<path d="M1724.500 16h5.500l-2.750 3z" fill="#666"/>
<!-- user -->
<g fill="none" stroke="#333" stroke-width="1.300"><circle cx="1755" cy="18" r="8.600"/><circle cx="1755" cy="15.300" r="3.400"/><path d="M1748.700 23.800c1.200-3.200 3.500-4.300 6.300-4.300s5.100 1.100 6.300 4.300"/></g>
<!-- help -->
<circle cx="1791" cy="18" r="8.600" fill="none" stroke="#333" stroke-width="1.300"/>
<!-- window controls -->
<path d="M1822 22.500h10" stroke="#222" stroke-width="1.600"/>
<g fill="none" stroke="#222" stroke-width="1.300"><path d="M1860.500 15v-3.500h10v8h-3.500"/><rect x="1856.500" y="15.500" width="10" height="8" fill="#f7f7f7"/></g>
<path d="M1894 13l10 10M1904 13l-10 10" stroke="#222" stroke-width="1.600"/>
</svg>
<div class="t" style="left:30px;top:9px;font-size:12.500px;line-height:18px;height:18px;color:#dc2a1f;letter-spacing:-0.300px;font-style:italic"><b style="letter-spacing:0">SOLID</b><span style="letter-spacing:-0.700px">WORKS</span></div>
<div class="t" style="left:1017px;top:10px;letter-spacing:-0.9px">Tennis Ball.SLDPRT *</div>
<div class="t" style="left:1559px;top:10px;color:#6e6e6e;letter-spacing:-0.87px">Search Commands</div>
<div class="t" style="left:1786.500px;top:9px;font-size:14px;font-weight:bold;line-height:18px;height:18px;letter-spacing:0;color:#333">?</div>
<!-- ===== ribbon ===== -->
<div class="vsep" style="left:267px;top:38px;height:75px"></div>
<div class="vsep" style="left:537px;top:38px;height:75px"></div>
<div class="vsep" style="left:767px;top:38px;height:75px"></div>
<div class="vsep" style="left:875px;top:38px;height:75px"></div>
<svg style="left:0;top:36px" width="1920" height="80" viewBox="0 36 1920 80">
<g stroke-linejoin="round" stroke-width="1">
<!-- Extruded Boss/Base -->
<g transform="translate(27 42)"><path d="M9 3l5-2.500h4.500v13L14 17H9z" fill="#f4f4f4" stroke="#555"/><path d="M14 .5V17" stroke="#777"/><path d="M.5 7.500L5 5h6.500v8.500L7 16H.5z" fill="#3f95c8" stroke="#1c4f74"/><path d="M.5 7.500H7V16M7 7.500l4.500-2.500" fill="none" stroke="#1c4f74"/><path d="M.5 7.500L5 5h6.500L7 7.500z" fill="#8ccbea" stroke="#1c4f74"/></g>
<!-- Revolved Boss/Base -->
<g transform="translate(88 41)"><path d="M5.500 3C8 .500 14 .500 16 4.500c2 4.500 0 10-4.500 12.500-4 2-9.500.5-10.500-2.500-.6-2 1-3.500 3-3 1 2 4 2.500 6 1 2-1.500 2.500-4.500 1-6-1.500-1.500-3.500-.500-4.500.500C5 6 4.500 4 5.500 3z" fill="#4a9fd0" stroke="#1c4f74"/><path d="M3 9.500l10 3.500" stroke="#222" stroke-width="1.300"/><path d="M4.500 8l9.500 3.500" stroke="#ddd" stroke-width=".8"/></g>
<!-- Swept Boss/Base -->
<g transform="translate(128 40)"><path d="M1 11c1.500-1 3-1 4 0 1 1.500 3 1 3.500-1C9.500 6 9 2.500 13 1.500c2-.5 4.500 0 5.500 1.500.5 2-1 3.500-3 3.500-1.500 0-1.500 2-2 4.500-1 4-4 6.500-8 5.500C2.500 16 .5 13.500 1 11z" fill="#4a9fd0" stroke="#1c4f74"/><ellipse cx="16.500" cy="4" rx="1.800" ry="2.500" fill="#8ccbea" stroke="#1c4f74" stroke-width=".7"/></g>
<!-- Lofted Boss/Base -->
<g transform="translate(130 66)"><path d="M5 2.500C5 8 4 10 .800 13.500L8 18l7.200-4.500C12 10 11 8 11 2.500z" fill="#3f8fc0" stroke="#1c4f74"/><ellipse cx="8" cy="2.500" rx="3" ry="1.600" fill="#f0f0f0" stroke="#666" stroke-width=".8"/></g>
<!-- Boundary Boss/Base -->
<g transform="translate(129 92)"><path d="M1 8l6-5 3 1.500L13.500 1 18 4v8l-11 5.500L1 14z" fill="#e6e6e6" stroke="#555"/><path d="M1 8l6 3.500L18 4M7 11.500v6" fill="none" stroke="#555"/><path d="M4 6.500l3 1.500M10 5l3 1.500M8.500 3.500L12 5.500" stroke="#999" stroke-width=".7"/></g>
<!-- Extruded Cut -->
<g transform="translate(289 42)"><path d="M1 3l4-2.500h11v13L12 17H1z" fill="#ececec" stroke="#555"/><path d="M1 3h11v14M12 3l4-2.500" fill="none" stroke="#555"/><rect x="3.500" y="5.500" width="6.500" height="8.500" fill="#fff" stroke="#555" stroke-width=".8"/><path d="M7 6v6H4" fill="none" stroke="#2a7fb5" stroke-width="2"/></g>
<!-- Hole Wizard -->
<g transform="translate(338 41)"><path d="M1 7l5-3h9.500v10L11 18H1z" fill="#ececec" stroke="#555"/><path d="M1 7h10v11M11 7l4.500-3" fill="none" stroke="#555"/><circle cx="6.500" cy="12" r="3" fill="#3f95c8" stroke="#1c4f74"/><circle cx="6.500" cy="12" r="1.200" fill="#bfe0f2"/><path d="M11.500 4l6.500 6" stroke="#222" stroke-width="2.400"/><path d="M8 2l1 1M12 .500l.500 1.300M16 1l1 1.200M5.500 3.500l1 .7M18 4.500l.6 1" stroke="#f0a020" stroke-width="1.300"/></g>
<!-- Revolved Cut -->
<g transform="translate(390 42)"><path d="M.800 4.500C.800 2 4.500.800 9 .800s8.200 1.200 8.200 3.700V13c0 2-2 3.500-4 4l-4.200-3-4.200 3c-2-.5-4-2-4-4z" fill="#ececec" stroke="#555"/><path d="M5 5l4 2.500L13 5v12l-4-3-4 3z" fill="#3f8fc0" stroke="#1c4f74"/><path d="M9 7.500V14" stroke="#1c4f74"/></g>
<!-- Swept Cut -->
<g transform="translate(431 40)"><path d="M1 4l4-3h11v5h-3v7l-8 4H1z" fill="#ececec" stroke="#555"/><path d="M4.500 16C4.500 9 7 5.500 12.500 5v3.500c-3 .5-4.500 3-4.500 6z" fill="#3f8fc0" stroke="#1c4f74"/><rect x="12" y="6" width="4.500" height="5" fill="#f6f6f6" stroke="#555" stroke-width=".8"/></g>
<!-- Lofted Cut -->
<g transform="translate(431 66)"><path d="M1 4l5-3h10.500v11L11 17.500H1z" fill="#ececec" stroke="#555"/><path d="M1 4h6v13.500" fill="none" stroke="#555"/><path d="M9 4c1 4 0 8-.5 12.500l4.500-2.500c.5-4 1-7 .5-10z" fill="#3f8fc0" stroke="#1c4f74"/></g>
<!-- Boundary Cut -->
<g transform="translate(430 92)"><path d="M1 9v5l6 3.500L18 12V5z" fill="#f0f0f0" stroke="#555"/><path d="M1 9l6-5.500 3 1.800L13.500 1.500 18 5 7 12z" fill="#4a9fd0" stroke="#1c4f74"/><path d="M7 12v5.500" stroke="#555"/><path d="M4 7.500l3 1.700M10 6l3 1.500" stroke="#bfe0f2" stroke-width=".8"/></g>
<!-- Fillet -->
<g transform="translate(545 42)"><path d="M1 7c0-3 2-5.500 6-5.500h11.500v10L13 17H1z" fill="#f0f0f0" stroke="#555"/><path d="M7 1.500h11.500L13 7.500H1C1 4 3.500 1.500 7 1.500z" fill="#4a9fd0" stroke="#1c4f74"/><path d="M13 7.500V17" stroke="#555"/></g>
<!-- Linear Pattern -->
<g transform="translate(587 42)" fill="#fff" stroke="#333" stroke-width="1.100"><path d="M1 1h4v2h2.500v3H5v2H1zM10 1h4v2h2.500v3H14v2h-4zM1 10h4v2h2.500v3H5v2H1zM10 10h4v2h2.500v3H14v2h-4z"/><path d="M1 1h4v2h2.500v3H5v2H1z" fill="#3f95c8" stroke="#1c4f74"/></g>
<!-- Rib -->
<g transform="translate(623 40)"><path d="M1 13l9-12h6v12l-5 4.500H1z" fill="#ececec" stroke="#555"/><path d="M4 13L11 3.500V12z" fill="#4a9fd0" stroke="#1c4f74"/><path d="M1 13h10l5-4M11 13v4.500" fill="none" stroke="#555"/></g>
<!-- Draft -->
<g transform="translate(623 66)"><path d="M1 6l7-4.500 8.500 5V15l-4 2.500H1z" fill="#3f8fc0" stroke="#1c4f74"/><path d="M1 6h9l2.500 3.500V17.500M10 6l-2-4.500" fill="none" stroke="#1c4f74"/><path d="M12.500 9.500l4-3V15l-4 2.500z" fill="#f4f4f4" stroke="#555"/></g>
<!-- Shell -->
<g transform="translate(623 92)"><path d="M1 3.500L5 1h11.500v11.500L12 17.500H1z" fill="#f0f0f0" stroke="#555"/><path d="M4 5.500h9.500v9L10 15V8H4z" fill="#3f95c8" stroke="#1c4f74"/><path d="M1 3.500h11v14" fill="none" stroke="#555"/></g>
<!-- Wrap -->
<g transform="translate(687 40)"><path d="M1 4v10c0 2 4 3.500 8.500 3.500S18 16 18 14V4" fill="#e8e8e8" stroke="#555"/><ellipse cx="9.500" cy="4" rx="8.500" ry="3.200" fill="#f8f8f8" stroke="#555"/><path d="M3.500 9.500h4.500v5.500H3.500zM10.500 9.800h4.500v5.200h-4.500z" fill="#3f95c8" stroke="#1c4f74"/><path d="M5 11h1.800v2.500H5zM12 11h1.800v2.500H12z" fill="#e8e8e8" stroke="#1c4f74" stroke-width=".6"/></g>
<!-- Intersect -->
<g transform="translate(688 66)"><path d="M1 8l5-2 .5 6.500 8-2.500 3-4.500V13l-10 3.500L1 18z" fill="#3f8fc0" stroke="#1c4f74"/><path d="M6 4.500L9.500 1.500h7v7.500L13 12H6z" fill="#f4f4f4" stroke="#555"/><path d="M6 4.500h7V12M13 4.500l3.500-3" fill="none" stroke="#555"/></g>
<!-- Mirror -->
<g transform="translate(688 92)"><path d="M1 1h4v4.500h3V12H5v4.500H1z" fill="#3f95c8" stroke="#1c4f74"/><path d="M18 1h-4v4.500h-3V12h3v4.500h4z" fill="#fff" stroke="#444"/><path d="M9.500 0v18" stroke="#222" stroke-width="1.100"/></g>
<!-- Reference Geometry -->
<g transform="translate(790 41)"><circle cx="3.500" cy="3.500" r="2.600" fill="#3f95c8" stroke="#1c4f74"/><path d="M7 6.500L18 2.500v12L7 18.500z" fill="#4a9fd0" stroke="#1c4f74"/><path d="M12.500 2v17" stroke="#1c4f74" stroke-dasharray="2 1.500" stroke-width=".9"/></g>
<!-- Curves -->
<g transform="translate(843 41)"><path d="M2 1.500c3 1 4 4 3 8-1 4 1.500 7.500 5 7.500 3 0 5-3 4-7-1-4 0-7 3-8.500" fill="none" stroke="#2a7fb5" stroke-width="1.500" stroke-linecap="round"/></g>
<!-- Instant3D -->
<g transform="translate(898 41)"><path d="M4 1.500L18 5.500l-1.200 4L2.800 5.500z" fill="#f2c522" stroke="#8a6d00" stroke-width=".8"/><path d="M6.500 2.500l-.6 2M9.500 3.300l-.6 2M12.500 4.200l-.6 2M15.500 5l-.6 2" stroke="#5a4500" stroke-width=".8"/><path d="M1.500 7.500l11 6" stroke="#1f6aa0" stroke-width="2.200"/><path d="M17 16.500l-7.500-.5 3.500-5.500z" fill="#1f6aa0"/></g>
</g>
<!-- dropdown arrows -->
<path d="M344.500 102h6l-3 3zM552.500 102h6l-3 3zM593.500 102h6l-3 3zM796 102h6l-3 3zM848.500 102h6l-3 3z" fill="#333"/>
<path d="M1901.500 105.500l4.500-4.500 4.500 4.500" fill="none" stroke="#222" stroke-width="1.700"/>
</svg>
<div class="rbc" style="left:36px;top:62px">Extruded
Boss/Base</div>
<div class="rbc" style="left:96px;top:62px">Revolved
Boss/Base</div>
<div class="t rb" style="left:154px;top:41px">Swept Boss/Base</div>
<div class="t rb" style="left:154px;top:67px">Lofted Boss/Base</div>
<div class="t rb" style="left:154px;top:93px">Boundary Boss/Base</div>
<div class="rbc" style="left:297px;top:62px">Extruded
Cut</div>
<div class="rbc" style="left:348px;top:62px">Hole
Wizard</div>
<div class="rbc" style="left:399px;top:62px">Revolved
Cut</div>
<div class="t rb" style="left:455px;top:41px">Swept Cut</div>
<div class="t rb" style="left:455px;top:67px">Lofted Cut</div>
<div class="t rb" style="left:455px;top:93px">Boundary Cut</div>
<div class="rbc" style="left:555.500px;top:62px">Fillet</div>
<div class="rbc" style="left:596.500px;top:62px">Linear
Pattern</div>
<div class="t rb" style="left:648px;top:41px">Rib</div>
<div class="t rb" style="left:648px;top:67px">Draft</div>
<div class="t rb" style="left:648px;top:93px">Shell</div>
<div class="t rb" style="left:712px;top:41px">Wrap</div>
<div class="t rb" style="left:712px;top:67px">Intersect</div>
<div class="t rb" style="left:712px;top:93px">Mirror</div>
<div class="rbc" style="left:799.500px;top:62px">Reference
Geometry</div>
<div class="rbc" style="left:852px;top:62px">Curves</div>
<div class="rbc" style="left:907px;top:62px">Instant3D</div>
<!-- ===== command manager tabs ===== -->
<div class="abs" style="left:0;top:117px;width:460px;height:22px;background:#f7f7f7"></div>
<div class="t" style="left:8px;top:120px;color:#000">Features</div>
<div class="tab" style="left:63px;width:57px">Sketch</div>
<div class="tab" style="left:119px;width:61px">Surfaces</div>
<div class="tab" style="left:179px;width:88px">Direct Editing</div>
<div class="tab" style="left:266px;width:62px">Evaluate</div>
<div class="tab" style="left:327px;width:133px;letter-spacing:-0.75px">SOLIDWORKS Add-Ins</div>
<!-- ===== left panel (FeatureManager) ===== -->
<div class="abs" style="left:0;top:139px;width:230px;height:903px;background:#f7f7f7;border-right:1px solid #8c8c8c"></div>
<div class="abs" style="left:0;top:139px;width:229px;height:1px;background:#c9c9c9"></div>
<div class="abs" style="left:0;top:143px;width:227px;height:1px;background:#dedede"></div>
<div class="abs" style="left:0;top:158px;width:227px;height:1px;background:#d6d6d6"></div>
<div class="abs" style="left:110px;top:148px;width:6px;height:6px;border-radius:3px;background:#c4c4c4;border:1px solid #b0b0b0"></div>
<div class="abs" style="left:41px;top:163px;width:41px;height:26px;background:#d3d3d3;border:1px solid #a6a6a6"></div>
<div class="abs" style="left:81px;top:163px;width:41px;height:26px;background:#d3d3d3;border:1px solid #a6a6a6"></div>
<div class="abs" style="left:121px;top:163px;width:41px;height:26px;background:#d3d3d3;border:1px solid #a6a6a6"></div>
<div class="abs" style="left:161px;top:163px;width:41px;height:26px;background:#d3d3d3;border:1px solid #a6a6a6"></div>
<div class="abs" style="left:0;top:188px;width:41px;height:1px;background:#f7f7f7"></div>
<div class="abs" style="left:0;top:163px;width:41px;height:1px;background:#c4c4c4"></div>
<div class="abs" style="left:5px;top:190px;width:219px;height:25px;border:1px solid #d2d2d2;background:#f9f9f9"></div>
<svg style="left:0;top:139px" width="230" height="560" viewBox="0 139 230 560"><g stroke-linejoin="round">
<g transform="translate(13 166) scale(1.05)"><path d="M.800 7.200L6.800.800l6 1.800v4.600l4.400 2.200V14l-7.600 3.400L.800 11.600z" fill="#f2c522" stroke="#5f4800" stroke-width="1" stroke-linejoin="round"/><path d="M.800 7.200L6.800.800l6 1.800L7 8.500z" fill="#ffe27a" stroke="#5f4800" stroke-width=".7"/><path d="M7 8.500v3l2.600 1.300 7.600-3.400-4.400-2.200" fill="#ffe27a" stroke="#5f4800" stroke-width=".7"/><path d="M.800 7.200L7 8.500M9.600 12.800v4.600M7 11.500L.800 11.600" fill="none" stroke="#5f4800" stroke-width=".7"/></g>
<g transform="translate(53 167)"><rect x=".6" y=".6" width="17" height="16.500" fill="#fff" stroke="#333" stroke-width="1.200"/><rect x=".6" y=".6" width="17" height="3" fill="#3f95c8" stroke="#1c4f74" stroke-width=".8"/><rect x="2.500" y="5.500" width="3.500" height="2.200" fill="#3f95c8"/><rect x="2.500" y="9.300" width="3.500" height="2.200" fill="#3f95c8"/><rect x="2.500" y="13" width="3.500" height="2.200" fill="#3f95c8"/><path d="M7.500 6.600h8M7.500 10.400h8M7.500 14.100h8" stroke="#333" stroke-width="1.100"/></g>
<g transform="translate(95 167)" fill="#fff" stroke="#333" stroke-width="1.200"><path d="M1.500 0v17.500M1.500 4.500h4M1.500 12.500h7" fill="none"/><rect x="5.500" y="1" width="5.500" height="6"/><rect x="8.500" y="9.500" width="5.500" height="6"/><path d="M0 .600h3M0 17h3" /></g>
<g transform="translate(142 176)" fill="none" stroke="#111" stroke-width="2"><circle r="5.600"/><path d="M0-9V9M-9 0H9" stroke-width="1.600"/></g>
<g transform="translate(182 175)"><circle r="8.800" fill="#e23a2a"/><path d="M0 0L-8.800 0A8.800 8.800 0 0 1 -2 -8.600z" fill="#2b6fd0"/><path d="M0 0L-8.800 0A8.800 8.800 0 0 0 -1 8.700z" fill="#3aa83a"/><path d="M0 0L-1 8.700A8.800 8.800 0 0 0 8.700 1z" fill="#f2c522"/><ellipse cx="4" cy="-3.500" rx="2.800" ry="5" transform="rotate(-35 4 -3.500)" fill="#2a1515"/><ellipse cx="-3" cy="-4" rx="3" ry="2" fill="#fff" opacity=".35"/></g>
<path d="M214 170l5 5-5 5" fill="none" stroke="#333" stroke-width="1.800"/>
<g transform="translate(8 194)"><path d="M.800 3.500h15.400l-6 7v6l-3.400 1.500v-7.500z" fill="#fff" stroke="#333" stroke-width="1.100"/><rect x=".800" y=".800" width="15.400" height="2.700" fill="#3f95c8" stroke="#1c4f74" stroke-width=".8"/></g>
<g transform="translate(4.500 217)"><path d="M.800 7.200L6.800.800l6 1.800v4.600l4.400 2.200V14l-7.600 3.400L.800 11.600z" fill="#f2c522" stroke="#5f4800" stroke-width="1" stroke-linejoin="round"/><path d="M.800 7.200L6.800.800l6 1.800L7 8.500z" fill="#ffe27a" stroke="#5f4800" stroke-width=".7"/><path d="M7 8.500v3l2.600 1.300 7.600-3.400-4.400-2.200" fill="#ffe27a" stroke="#5f4800" stroke-width=".7"/><path d="M.800 7.200L7 8.500M9.600 12.800v4.600M7 11.500L.800 11.600" fill="none" stroke="#5f4800" stroke-width=".7"/></g>
<g transform="translate(27 238.7)"><path d="M1 3.500c0-1 .5-1.500 1.500-1.500h4l1.500 2h8c1 0 1.500.5 1.500 1.500V16c0 1-.5 1.500-1.500 1.500H2.500C1.500 17.500 1 17 1 16z" fill="#f2f2f2" stroke="#4a4a4a" stroke-width="1.100"/><path d="M1 6h16.500" stroke="#9a9a9a" stroke-width=".8"/><circle cx="10" cy="11.500" r="4" fill="#fff" stroke="#2a7fb5" stroke-width="1.300"/><path d="M10 9v2.700l2 1" fill="none" stroke="#333" stroke-width="1"/><path d="M4 11l2 2.500 1.500-3z" fill="#2a7fb5"/></g>
<path d="M10 243.7l4.500 4-4.500 4z" fill="#6e6e6e"/>
<g transform="translate(27 260.7)"><path d="M1 3.500c0-1 .5-1.500 1.500-1.500h4l1.500 2h8c1 0 1.500.5 1.500 1.500V16c0 1-.5 1.500-1.500 1.500H2.500C1.500 17.500 1 17 1 16z" fill="#f2f2f2" stroke="#4a4a4a" stroke-width="1.100"/><path d="M1 6h16.500" stroke="#9a9a9a" stroke-width=".8"/><circle cx="9.500" cy="11.500" r="4.200" fill="#fff" stroke="#333" stroke-width="1.200"/><path d="M9.500 11.500l2.500-2.800" stroke="#d42" stroke-width="1.400"/><path d="M6.500 13.500a3.500 3.500 0 0 1 0-4" fill="none" stroke="#2a7fb5" stroke-width="1.300"/></g>
<g transform="translate(27 282.7)"><path d="M1 3.500c0-1 .5-1.500 1.500-1.500h4l1.500 2h8c1 0 1.500.5 1.500 1.500V16c0 1-.5 1.500-1.500 1.500H2.500C1.500 17.500 1 17 1 16z" fill="#f2f2f2" stroke="#4a4a4a" stroke-width="1.100"/><path d="M1 6h16.500" stroke="#9a9a9a" stroke-width=".8"/><path d="M5.500 16l3.300-9h1.400l3.300 9M6.800 13h5.400" fill="none" stroke="#2a7fb5" stroke-width="1.500"/></g>
<path d="M10 287.7l4.500 4-4.500 4z" fill="#6e6e6e"/>
<g transform="translate(27 304.7)"><path d="M1 3.500c0-1 .5-1.500 1.500-1.500h4l1.500 2h8c1 0 1.500.5 1.500 1.500V16c0 1-.5 1.500-1.500 1.500H2.500C1.500 17.500 1 17 1 16z" fill="#f2f2f2" stroke="#4a4a4a" stroke-width="1.100"/><path d="M1 6h16.500" stroke="#9a9a9a" stroke-width=".8"/><path d="M6 9.500l3.500-1.700 3.500 1.700v4.300l-3.500 1.900L6 13.800z" fill="#3f95c8" stroke="#1c4f74" stroke-width=".9"/><path d="M6 9.500l3.500 1.800 3.500-1.800M9.500 11.300v4.400" fill="none" stroke="#1c4f74" stroke-width=".8"/></g>
<path d="M10 309.7l4.500 4-4.500 4z" fill="#6e6e6e"/>
<g transform="translate(27 326.7)"><path d="M6 3h11M6 9h11M6 15h4.500" stroke="#333" stroke-width="2"/><circle cx="2.500" cy="3" r="1.800" fill="#fff" stroke="#555"/><circle cx="2.500" cy="9" r="1.800" fill="#3f95c8" stroke="#1c4f74"/><circle cx="2.500" cy="15" r="1.800" fill="#f2c522" stroke="#8a6d00"/><circle cx="14.300" cy="15" r="3.100" fill="none" stroke="#222" stroke-width="2" stroke-dasharray="1.400 1.030"/><circle cx="14.300" cy="15" r="2.500" fill="none" stroke="#222" stroke-width="1.600"/></g>
<g transform="translate(27 348.7)"><path d="M3.500 5.500L13.500 2.500v12.500L3.500 18z" fill="#fdfdfd" stroke="#555" stroke-width="1.100" stroke-linejoin="round"/><path d="M8.500 0v19" stroke="#444" stroke-width="1" stroke-dasharray="3 1.600"/></g>
<g transform="translate(27 370.7)"><path d="M3.500 5.500L13.500 2.500v12.500L3.500 18z" fill="#fdfdfd" stroke="#555" stroke-width="1.100" stroke-linejoin="round"/><path d="M8.500 0v19" stroke="#444" stroke-width="1" stroke-dasharray="3 1.600"/></g>
<g transform="translate(27 392.7)"><path d="M3.500 5.500L13.500 2.500v12.500L3.500 18z" fill="#fdfdfd" stroke="#555" stroke-width="1.100" stroke-linejoin="round"/><path d="M8.500 0v19" stroke="#444" stroke-width="1" stroke-dasharray="3 1.600"/></g>
<g transform="translate(27 414.7)"><path d="M3.500 1v14.500H17" fill="none" stroke="#222" stroke-width="1.700"/><path d="M3.500 0L1 4h5zM18.500 15.500l-4-2.500v5z" fill="#222"/></g>
<g transform="translate(27 436.7)"><path d="M5.500 3C8 .500 14 .500 16 4.500c2 4.500 0 10-4.500 12.500-4 2-9.500.5-10.500-2.500-.6-2 1-3.500 3-3 1 2 4 2.500 6 1 2-1.500 2.500-4.500 1-6-1.500-1.500-3.500-.500-4.500.500C5 6 4.500 4 5.500 3z" fill="#4a9fd0" stroke="#1c4f74"/><path d="M3 9.500l10 3.500" stroke="#222" stroke-width="1.300"/><path d="M4.500 8l9.500 3.500" stroke="#ddd" stroke-width=".8"/></g>
<path d="M10 441.7l4.500 4-4.500 4z" fill="#6e6e6e"/>
<g transform="translate(27 458.7)"><path d="M2 6l5-3.500 6 1.500-1.500 4.500L6 10.500z" fill="#f6f6f6" stroke="#444" stroke-width="1" stroke-dasharray="2 1"/><path d="M7 12l5-3 6 2-2 4.500-5.500 2z" fill="#4a9fd0" stroke="#1c4f74"/><path d="M9.500 1.500c3-.5 5.500 1 6 4" fill="none" stroke="#222" stroke-width="1.400"/><path d="M17.500 4l-2 3.500-2-3z" fill="#222"/><path d="M2 11l4 5" stroke="#222" stroke-width="1.500"/><path d="M7.500 18l-5-.5 3.500-3.500z" fill="#222"/></g>
<g transform="translate(27 480.7)"><path d="M15.500 2H5.500C3 2 1.500 3.500 1.500 6v5.500c0 3 2 5 5 5h9" fill="none" stroke="#555" stroke-width="1.200"/></g>
<g transform="translate(27 502.7)"><path d="M3.500 5.500L13.500 2.500v12.500L3.500 18z" fill="#fdfdfd" stroke="#555" stroke-width="1.100" stroke-linejoin="round"/><path d="M8.500 0v19" stroke="#444" stroke-width="1" stroke-dasharray="3 1.600"/></g>
<g transform="translate(27 524.7)"><path d="M3.500 5.500L13.500 2.500v12.500L3.500 18z" fill="#fdfdfd" stroke="#555" stroke-width="1.100" stroke-linejoin="round"/><path d="M8.500 0v19" stroke="#444" stroke-width="1" stroke-dasharray="3 1.600"/></g>
<g transform="translate(27 546.7)"><path d="M3.500 5.500L13.500 2.500v12.500L3.500 18z" fill="#fdfdfd" stroke="#555" stroke-width="1.100" stroke-linejoin="round"/><path d="M8.500 0v19" stroke="#444" stroke-width="1" stroke-dasharray="3 1.600"/></g>
<g transform="translate(27 568.7)"><path d="M3.500 5.500L13.500 2.500v12.500L3.500 18z" fill="#fdfdfd" stroke="#555" stroke-width="1.100" stroke-linejoin="round"/><path d="M8.500 0v19" stroke="#444" stroke-width="1" stroke-dasharray="3 1.600"/></g>
<g transform="translate(27 590.7)"><path d="M1 4l3-2.500h4V15l-3 2.500H1z" fill="#ececec" stroke="#555"/><path d="M8 2.500l4-2 5 2v12l-4 3-5-2.500z" fill="#3f8fc0" stroke="#1c4f74"/><path d="M12 4.500v12" stroke="#bfe0f2" stroke-width="1"/><path d="M10 3v13" stroke="#1c4f74" stroke-width=".8"/></g>
<g transform="translate(27 612.7)"><path d="M1 4l4-3h11v5h-3v7l-8 4H1z" fill="#ececec" stroke="#555"/><path d="M4.500 16C4.500 9 7 5.500 12.500 5v3.500c-3 .5-4.500 3-4.500 6z" fill="#3f8fc0" stroke="#1c4f74"/><rect x="12" y="6" width="4.500" height="5" fill="#f6f6f6" stroke="#555" stroke-width=".8"/></g>
<g transform="translate(27 634.7)"><path d="M1 5l5-3.500h9.500V13L11 17H1z" fill="#3f95c8" stroke="#1c4f74"/><path d="M1 5h10v12M11 5l4.500-3.500" fill="none" stroke="#1c4f74"/><path d="M1 5l5-3.500h9.500L11 5z" fill="#8ccbea" stroke="#1c4f74"/><path d="M12 13l5.500 5.500M17.500 13L12 18.500" stroke="#222" stroke-width="1.800"/></g>
<g transform="translate(27 656.7)"><path d="M1 7c0-3 2-5.500 6-5.500h10.500v10L12.500 17H1z" fill="#f0f0f0" stroke="#555"/><path d="M7 1.500h10.500L12.500 7.500H1C1 4 3.500 1.500 7 1.500z" fill="#4a9fd0" stroke="#1c4f74"/><path d="M12.500 7.500V17" stroke="#555"/></g>
</g></svg>
<div class="t" style="left:27.500px;top:219px;width:201px;overflow:hidden;letter-spacing:-0.33px">Tennis Ball (Default) &lt;&lt;Default&gt;_Displ</div>
<div class="t" style="left:50px;top:241px">History</div>
<div class="t" style="left:50px;top:263px">Sensors</div>
<div class="t" style="left:50px;top:285px">Annotations</div>
<div class="t" style="left:50px;top:307px">Solid Bodies(1)</div>
<div class="t" style="left:50px;top:329px">Material &lt;not specified&gt;</div>
<div class="t" style="left:50px;top:351px">Front Plane</div>
<div class="t" style="left:50px;top:373px">Top Plane</div>
<div class="t" style="left:50px;top:395px">Right Plane</div>
<div class="t" style="left:50px;top:417px">Origin</div>
<div class="t" style="left:50px;top:439px">Revolve1</div>
<div class="t" style="left:50px;top:461px">Body-Move/Copy1</div>
<div class="t" style="left:50px;top:483px">Sketch2</div>
<div class="t" style="left:50px;top:505px">Upper Plane</div>
<div class="t" style="left:50px;top:527px">Lower Plane</div>
<div class="t" style="left:50px;top:549px">Right Hand Plane</div>
<div class="t" style="left:50px;top:571px">Left Hand Plane</div>
<div class="t" style="left:50px;top:593px">Split1</div>
<div class="t" style="left:50px;top:615px">Cut-Sweep1</div>
<div class="t" style="left:50px;top:637px">Body-Delete/Keep 1</div>
<div class="t" style="left:50px;top:659px">Fillet1</div>
<div class="abs" style="left:1px;top:677px;width:226px;height:2px;background:#2a8ad4"></div>
<div class="abs" style="left:229px;top:561px;width:9px;height:39px;background:#f7f7f7;border:1px solid #8c8c8c;border-left:none"></div>
<div class="abs" style="left:230px;top:577px;width:5px;height:5px;border-radius:3px;background:#c4c4c4;border:1px solid #aaa"></div>
<div class="abs" style="left:0;top:1021px;width:229px;height:19px;background:#f3f3f3"></div>
<div class="abs" style="left:18px;top:1023px;width:152px;height:15px;background:#cdcdcd"></div>
<svg style="left:0;top:1021px" width="229" height="19" viewBox="0 0 229 19"><path d="M12 5.500l-4.500 4 4.500 4M217 5.500l4.500 4-4.500 4" fill="none" stroke="#444" stroke-width="1.600"/></svg>
<!-- ===== heads-up view toolbar ===== -->
<svg style="left:690px;top:118px" width="830" height="28" viewBox="690 118 830 28">
<g stroke-linejoin="round" opacity=".92">
<g transform="translate(694 122)"><circle cx="11" cy="7" r="6.200" fill="#f4f8fb" stroke="#6a8aa0" stroke-width="1.400"/><path d="M11 3.500v7M7.500 7h7" stroke="#777" stroke-width=".9"/><path d="M6.500 11.500L1 17.500" stroke="#3f95c8" stroke-width="3.200" stroke-linecap="round"/></g>
<g transform="translate(719 122)"><rect x="6.500" y=".800" width="12" height="12" fill="none" stroke="#444" stroke-width="1.100" stroke-dasharray="3 2"/><circle cx="10.500" cy="7.500" r="5.800" fill="#f4f8fb" stroke="#6a8aa0" stroke-width="1.400"/><path d="M6.500 12L1 17.500" stroke="#3f95c8" stroke-width="3.200" stroke-linecap="round"/></g>
<g transform="translate(746 122)"><path d="M1 12.500L13 2.500l4.500 2.500-10 11.500c-2.500 1.500-6.500-1-6.500-4z" fill="#e8e8e8" stroke="#777" stroke-width="1"/><ellipse cx="15" cy="4" rx="2" ry="3" transform="rotate(-40 15 4)" fill="#bbb" stroke="#777" stroke-width=".8"/><path d="M18 14.500h-7" stroke="#2a7fb5" stroke-width="2.400"/><path d="M7.500 14.500l4.500-3.500v7z" fill="#2a7fb5"/></g>
<g transform="translate(772 123)"><path d="M.800 5c0-2.500 3.500-4 8-4s8 1.500 8 4v9c0 1.500-2 2.500-4 3V9.500H5V17c-2-.5-4.200-1.500-4.200-3z" fill="#4a9fd0" stroke="#1c4f74"/><path d="M5 9.500c0-2 1.500-3 4-3s4 1 4 3" fill="#e8e8e8" stroke="#666"/><path d="M2 8l2.500 3M2 11l2.500 3M14 8l2.500 3M14 11l2.500 3" stroke="#bfe0f2" stroke-width=".9"/></g>
<g transform="translate(797 122)"><path d="M1 12.500L13 2.500l4.500 2.500-10 11.500c-2.500 1.500-6.500-1-6.500-4z" fill="#e8e8e8" stroke="#777"/><path d="M5 1l5-.5-2 3.500 3.500-.5L5.500 9.500l1-3.500-3 .5z" fill="#f29a1f" stroke="#b56a00" stroke-width=".6"/><path d="M9.500 18.500l3.300-9h1.400l3.300 9M11 15.500h5" fill="none" stroke="#2a7fb5" stroke-width="1.400"/></g>
<g transform="translate(824 122)"><path d="M5.500 1h12v12l-5 5.500H.800V6.500z" fill="#fdfdfd" stroke="#444" stroke-width="1"/><path d="M5.500 1v12H17.500M5.500 13L.800 18.500" fill="none" stroke="#666" stroke-width=".8"/><rect x=".800" y="6.500" width="11.700" height="12" fill="#7bbfe2" stroke="#1c4f74"/><path d="M12.500 6.500l5-5.500" stroke="#444"/></g>
<g transform="translate(865 122)"><path d="M1 3.500L6 1h11v13.500l-5 4H1z" fill="#f2f2f2" stroke="#555"/><path d="M1 3.500h8.500v15H1z" fill="#7bbfe2" stroke="#1c4f74"/><path d="M1 3.500L6 1h11l-7.500 2.500z" fill="#b9dff2" stroke="#1c4f74" stroke-width=".8"/></g>
<g transform="translate(904 123)"><path d="M.800 8C4 3 8 1.500 9 1.500v13C8 14.500 4 13 .800 8z" fill="#d8d8d8" stroke="#777"/><path d="M9 1.500c1 0 5 1.500 8.200 6.500-3.200 5-7.200 6.500-8.200 6.500z" fill="#f0f0f0" stroke="#aaa"/><circle cx="9" cy="8" r="3.600" fill="#555"/><path d="M9 0v17" stroke="#333" stroke-width="1"/></g>
<g transform="translate(953 131)"><circle r="8.800" fill="#e23a2a"/><path d="M0 0L-8.800 0A8.800 8.800 0 0 1 -2 -8.600z" fill="#2b6fd0"/><path d="M0 0L-8.800 0A8.800 8.800 0 0 0 -1 8.700z" fill="#3aa83a"/><path d="M0 0L-1 8.700A8.800 8.800 0 0 0 8.700 1z" fill="#e8e8e8"/><ellipse cx="-3" cy="-4" rx="3.500" ry="2.200" fill="#fff" opacity=".45"/><path d="M-3 10L7 0l3 3L0 13l-4 1z" fill="#f2c522" stroke="#7a5e00" stroke-width=".8"/><path d="M7 0l1.500-1.500 3 3L10 3z" fill="#e07070" stroke="#7a3030" stroke-width=".7"/></g>
<g transform="translate(979 130)"><circle r="8.500" fill="#e23a2a"/><path d="M0 0L-8.500 0A8.500 8.500 0 0 1 -2 -8.300z" fill="#2b6fd0"/><path d="M0 0L-8.500 0A8.500 8.500 0 0 0 -1 8.400z" fill="#3aa83a"/><path d="M0 0L-1 8.400A8.500 8.500 0 0 0 8.400 1z" fill="#f2c522"/><ellipse cx="-3" cy="-4" rx="3.500" ry="2.200" fill="#fff" opacity=".45"/><rect x="-9.500" y="5" width="19" height="6.500" fill="#fff" stroke="#333" stroke-width=".7"/><path d="M-9.500 5h3.800v3.200h-3.800zM-1.900 5h3.800v3.200h-3.800zM5.700 5h3.800v3.200H5.700zM-5.700 8.200h3.800v3.300h-3.800zM1.900 8.200h3.800v3.300H1.900z" fill="#333"/></g>
<g transform="translate(1010 123)"><rect x=".600" y=".600" width="17.500" height="11.500" fill="#dcdcdc" stroke="#666" stroke-width="1.200"/><path d="M9.300 12v3.500M5 16h9" stroke="#444" stroke-width="1.600"/></g>
</g>
<path d="M849.500 130.500h5.500l-2.750 3zM889.500 130.500h5.500l-2.750 3zM929.500 130.500h5.500l-2.750 3zM996 130.500h5.500l-2.750 3zM1035.500 130.500h5.500l-2.750 3z" fill="#8a8a8a"/>
<!-- viewport window controls -->
<g fill="none" stroke="#9a9a9a" stroke-width="1.100">
<rect x="1381.500" y="126.500" width="10" height="11"/><path d="M1387.500 129.500l-3 2.500 3 2.500z" fill="#9a9a9a" stroke="none"/>
<rect x="1407.500" y="126.500" width="10" height="11"/><path d="M1411.500 129.500l3 2.500-3 2.500z" fill="#9a9a9a" stroke="none"/>
<path d="M1434 136.500h10" stroke-width="1.500"/>
<path d="M1462.500 129.500v-3h9v7h-3"/><rect x="1459.500" y="129.500" width="9" height="7"/>
<path d="M1486 127l10 10M1496 127l-10 10" stroke-width="1.300"/>
</g>
</svg>
<!-- ===== triad ===== -->
<svg style="left:240px;top:940px" width="70" height="55" viewBox="240 940 70 55">
<path d="M270 986V962" stroke="#6fd38a" stroke-width="2.600"/><path d="M266.500 966h7l-3.500-8z" fill="#56c878"/><rect x="266" y="964" width="8" height="3" rx="1" fill="#0f7a2a"/>
<path d="M270 986l-14-5.500" stroke="#d01818" stroke-width="3.400"/><path d="M250.500 978l6.500-.500-2 5.500z" fill="#e03030"/>
<path d="M270 986l17-5" stroke="#1818c8" stroke-width="3.400"/><path d="M293 979l-7.500-1.500 1.500 6z" fill="#2020d0"/>
<text x="267.300" y="951" font-family="Liberation Sans,sans-serif" font-size="7.500" font-weight="bold" fill="#1c8a3a">Y</text>
<text x="244.500" y="977" font-family="Liberation Sans,sans-serif" font-size="7.500" font-weight="bold" fill="#e05050">X</text>
<text x="295" y="978.500" font-family="Liberation Sans,sans-serif" font-size="7.500" font-weight="bold" fill="#5050e0">Z</text>
</svg>
<!-- ===== bottom tabs ===== -->
<div class="abs" style="left:0;top:1043px;width:1511px;height:16px;background:#f7f7f7;border-top:1px solid #a0a0a0;border-bottom:1px solid #c8c8c8"></div>
<div class="abs" style="left:0;top:1043px;width:67px;height:16px;background:#bcbcbc;border:1px solid #9c9c9c"></div>
<svg style="left:0;top:1043px" width="67" height="16" viewBox="0 0 67 16"><g fill="#a9a9a9" stroke="#a0a0a0" stroke-width=".6"><path d="M13 3.500v9l-6-4.500zM5.500 3.500h1.500v9H5.500z"/><path d="M29 3.500v9l-6-4.500z"/><path d="M39 3.500v9l6-4.500z"/><path d="M54 3.500v9l6-4.500zM60 3.500h1.500v9H60z"/></g><path d="M17.500 0v16M33.500 0v16M49.500 0v16" stroke="#a6a6a6"/></svg>
<div class="abs" style="left:67px;top:1043px;width:56px;height:16px;background:#fbfbfb"></div>
<div class="t" style="left:79px;top:1043px;font-weight:bold;letter-spacing:-0.45px;color:#000">Model</div>
<div class="abs" style="left:123px;top:1043px;width:69px;height:16px;background:#d3d3d3;border:1px solid #a6a6a6;border-top:none"></div>
<div class="t" style="left:134px;top:1043px;letter-spacing:-0.7px">3D Views</div>
<div class="abs" style="left:191px;top:1043px;width:109px;height:16px;background:#d3d3d3;border:1px solid #a6a6a6;border-top:none"></div>
<div class="t" style="left:201px;top:1043px">Motion Study 1</div>
<!-- ===== status bar ===== -->
<div class="abs" style="left:0;top:1059px;width:1920px;height:19px;background:#f7f7f7;border-top:1px solid #cfcfcf"></div>
<div class="t" style="left:2px;top:1062px">Select entities to modify their appearance</div>
<div class="t" style="left:1635px;top:1062px">Editing Part</div>
<div class="t" style="left:1814px;top:1062px;letter-spacing:-0.6px">MMGS</div>
<svg style="left:1860px;top:1060px" width="60" height="18" viewBox="1860 1060 60 18"><path d="M1868 1072h6l-3-3.500z" fill="#333"/><g transform="translate(1901 1062)"><path d="M1 6l9-4.500 6 3-1 6-9 4.500L1 12z" fill="#f4f4f4" stroke="#444" stroke-width="1.100" stroke-linejoin="round"/><path d="M1 6l5 3 10-4.500M6 9v6" fill="none" stroke="#444"/><ellipse cx="8.500" cy="5.500" rx="2.500" ry="1.300" fill="none" stroke="#444"/></g></svg>
<div class="abs" style="left:0;top:1078px;width:1920px;height:2px;background:#1e2a3c"></div>
<!-- ===== right task pane ===== -->
<div class="abs" style="left:1511px;top:117px;width:409px;height:942px;background:#f7f7f7;border-left:1px solid #8c8c8c"></div>
<div class="abs" style="left:1512px;top:117px;width:408px;height:22px;background:#adadad;border-bottom:1px solid #5a5a5a"></div>
<div class="t" style="left:1615px;top:119px;font-weight:bold;color:#000;letter-spacing:-0.65px" id="aptitle">Appearances, Scenes, and Decals</div>
<div class="abs" style="left:1584px;top:268px;width:87px;height:21px;background:#cde6f7"></div>
<div class="abs" style="left:1512px;top:174px;width:408px;height:288px;overflow:hidden">
<svg style="left:0;top:0" width="408" height="300" viewBox="1512 174 408 300"><g stroke-linejoin="round">
<path d="M1545.500 188.500l4 4 4-4" fill="none" stroke="#333" stroke-width="1.600"/>
<g transform="translate(1563 181)"><path d="M.800 16.500V2.500c0-.8.400-1.200 1.200-1.200h4.500l1.500 2h8.500v3" fill="#f4f4f4" stroke="#555" stroke-width="1.100"/><path d="M.800 16.500L4.500 6.300h15L16 16.500z" fill="#fbfbfb" stroke="#555" stroke-width="1.100"/><g transform="translate(14.500 13.800)"><circle r="4.300" fill="#e23a2a"/><path d="M0 0L-4.300 0A4.300 4.300 0 0 1 -.6 -4.250z" fill="#2b6fd0"/><path d="M0 0L-4.300 0A4.300 4.300 0 0 0 .6 4.250z" fill="#3aa83a"/></g></g>
<g transform="translate(1586 203)"><path d="M.800 16.500V2.500c0-.8.400-1.200 1.200-1.200h4.500l1.500 2h8.500v3" fill="#f4f4f4" stroke="#555" stroke-width="1.100"/><path d="M.800 16.500L4.500 6.300h15L16 16.500z" fill="#fbfbfb" stroke="#555" stroke-width="1.100"/><g transform="translate(14.500 13.800)"><circle r="4.300" fill="#e23a2a"/><path d="M0 0L-4.300 0A4.300 4.300 0 0 1 -.6 -4.250z" fill="#2b6fd0"/><path d="M0 0L-4.300 0A4.300 4.300 0 0 0 .6 4.250z" fill="#3aa83a"/></g></g>
<g transform="translate(1586 225)"><path d="M.800 16.500V2.500c0-.8.400-1.200 1.200-1.200h4.500l1.500 2h8.500v3" fill="#f4f4f4" stroke="#555" stroke-width="1.100"/><path d="M.800 16.500L4.500 6.300h15L16 16.500z" fill="#fbfbfb" stroke="#555" stroke-width="1.100"/><g transform="translate(14.500 13.800)"><circle r="4.300" fill="#e23a2a"/><path d="M0 0L-4.300 0A4.300 4.300 0 0 1 -.6 -4.250z" fill="#2b6fd0"/><path d="M0 0L-4.300 0A4.300 4.300 0 0 0 .6 4.250z" fill="#3aa83a"/></g></g>
<g transform="translate(1586 247)"><path d="M.800 16.500V2.500c0-.8.400-1.200 1.200-1.200h4.500l1.500 2h8.500v3" fill="#f4f4f4" stroke="#555" stroke-width="1.100"/><path d="M.800 16.500L4.500 6.300h15L16 16.500z" fill="#fbfbfb" stroke="#555" stroke-width="1.100"/><g transform="translate(14.500 13.800)"><circle r="4.300" fill="#e23a2a"/><path d="M0 0L-4.300 0A4.300 4.300 0 0 1 -.6 -4.250z" fill="#2b6fd0"/><path d="M0 0L-4.300 0A4.300 4.300 0 0 0 .6 4.250z" fill="#3aa83a"/></g></g>
<g transform="translate(1586 269)"><path d="M.800 16.500V2.500c0-.8.400-1.200 1.200-1.200h4.500l1.500 2h8.500v3" fill="#f4f4f4" stroke="#555" stroke-width="1.100"/><path d="M.800 16.500L4.500 6.300h15L16 16.500z" fill="#fbfbfb" stroke="#555" stroke-width="1.100"/><g transform="translate(14.500 13.800)"><circle r="4.300" fill="#e23a2a"/><path d="M0 0L-4.300 0A4.300 4.300 0 0 1 -.6 -4.250z" fill="#2b6fd0"/><path d="M0 0L-4.300 0A4.300 4.300 0 0 0 .6 4.250z" fill="#3aa83a"/></g></g>
<g transform="translate(1586 291)"><path d="M.800 16.500V2.500c0-.8.400-1.200 1.200-1.200h4.500l1.500 2h8.500v3" fill="#f4f4f4" stroke="#555" stroke-width="1.100"/><path d="M.800 16.500L4.500 6.300h15L16 16.500z" fill="#fbfbfb" stroke="#555" stroke-width="1.100"/><g transform="translate(14.500 13.800)"><circle r="4.300" fill="#e23a2a"/><path d="M0 0L-4.300 0A4.300 4.300 0 0 1 -.6 -4.250z" fill="#2b6fd0"/><path d="M0 0L-4.300 0A4.300 4.300 0 0 0 .6 4.250z" fill="#3aa83a"/></g></g>
<g transform="translate(1586 313)"><path d="M.800 16.500V2.500c0-.8.400-1.200 1.200-1.200h4.500l1.500 2h8.500v3" fill="#f4f4f4" stroke="#555" stroke-width="1.100"/><path d="M.800 16.500L4.500 6.300h15L16 16.500z" fill="#fbfbfb" stroke="#555" stroke-width="1.100"/><g transform="translate(14.500 13.800)"><circle r="4.300" fill="#e23a2a"/><path d="M0 0L-4.300 0A4.300 4.300 0 0 1 -.6 -4.250z" fill="#2b6fd0"/><path d="M0 0L-4.300 0A4.300 4.300 0 0 0 .6 4.250z" fill="#3aa83a"/></g></g>
<g transform="translate(1586 335)"><path d="M.800 16.500V2.500c0-.8.400-1.200 1.200-1.200h4.500l1.500 2h8.500v3" fill="#f4f4f4" stroke="#555" stroke-width="1.100"/><path d="M.800 16.500L4.500 6.300h15L16 16.500z" fill="#fbfbfb" stroke="#555" stroke-width="1.100"/><g transform="translate(14.500 13.800)"><circle r="4.300" fill="#e23a2a"/><path d="M0 0L-4.300 0A4.300 4.300 0 0 1 -.6 -4.250z" fill="#2b6fd0"/><path d="M0 0L-4.300 0A4.300 4.300 0 0 0 .6 4.250z" fill="#3aa83a"/></g></g>
<g transform="translate(1586 357)"><path d="M.800 16.500V2.500c0-.8.400-1.200 1.200-1.200h4.500l1.500 2h8.500v3" fill="#f4f4f4" stroke="#555" stroke-width="1.100"/><path d="M.800 16.500L4.500 6.300h15L16 16.500z" fill="#fbfbfb" stroke="#555" stroke-width="1.100"/><g transform="translate(14.500 13.800)"><circle r="4.300" fill="#e23a2a"/><path d="M0 0L-4.300 0A4.300 4.300 0 0 1 -.6 -4.250z" fill="#2b6fd0"/><path d="M0 0L-4.300 0A4.300 4.300 0 0 0 .6 4.250z" fill="#3aa83a"/></g></g>
<g transform="translate(1586 379)"><path d="M.800 16.500V2.500c0-.8.400-1.200 1.200-1.200h4.500l1.500 2h8.500v3" fill="#f4f4f4" stroke="#555" stroke-width="1.100"/><path d="M.800 16.500L4.500 6.300h15L16 16.500z" fill="#fbfbfb" stroke="#555" stroke-width="1.100"/><g transform="translate(14.500 13.800)"><circle r="4.300" fill="#e23a2a"/><path d="M0 0L-4.300 0A4.300 4.300 0 0 1 -.6 -4.250z" fill="#2b6fd0"/><path d="M0 0L-4.300 0A4.300 4.300 0 0 0 .6 4.250z" fill="#3aa83a"/></g></g>
<g transform="translate(1586 401)"><path d="M.800 16.500V2.500c0-.8.400-1.200 1.200-1.200h4.500l1.500 2h8.500v3" fill="#f4f4f4" stroke="#555" stroke-width="1.100"/><path d="M.800 16.500L4.500 6.300h15L16 16.500z" fill="#fbfbfb" stroke="#555" stroke-width="1.100"/><g transform="translate(14.500 13.800)"><circle r="4.300" fill="#e23a2a"/><path d="M0 0L-4.300 0A4.300 4.300 0 0 1 -.6 -4.250z" fill="#2b6fd0"/><path d="M0 0L-4.300 0A4.300 4.300 0 0 0 .6 4.250z" fill="#3aa83a"/></g></g>
<g transform="translate(1586 423)"><path d="M.800 16.500V2.500c0-.8.400-1.200 1.200-1.200h4.500l1.500 2h8.500v3" fill="#f4f4f4" stroke="#555" stroke-width="1.100"/><path d="M.800 16.500L4.500 6.300h15L16 16.500z" fill="#fbfbfb" stroke="#555" stroke-width="1.100"/><g transform="translate(14.500 13.800)"><circle r="4.300" fill="#e23a2a"/><path d="M0 0L-4.300 0A4.300 4.300 0 0 1 -.6 -4.250z" fill="#2b6fd0"/><path d="M0 0L-4.300 0A4.300 4.300 0 0 0 .6 4.250z" fill="#3aa83a"/></g></g>
<g transform="translate(1586 445)"><path d="M.800 16.500V2.500c0-.8.400-1.200 1.200-1.200h4.500l1.500 2h8.500v3" fill="#f4f4f4" stroke="#555" stroke-width="1.100"/><path d="M.800 16.500L4.500 6.300h15L16 16.500z" fill="#fbfbfb" stroke="#555" stroke-width="1.100"/><g transform="translate(14.500 13.800)"><circle r="4.300" fill="#e23a2a"/><path d="M0 0L-4.300 0A4.300 4.300 0 0 1 -.6 -4.250z" fill="#2b6fd0"/><path d="M0 0L-4.300 0A4.300 4.300 0 0 0 .6 4.250z" fill="#3aa83a"/></g></g>
</g></svg>
<div class="t" style="left:76px;top:9px">Plastic</div>
<div class="t" style="left:99px;top:31px">High Gloss</div>
<div class="t" style="left:99px;top:53px">Medium Gloss</div>
<div class="t" style="left:99px;top:75px">Low Gloss</div>
<div class="t" style="left:99px;top:97px">Soft Touch</div>
<div class="t" style="left:99px;top:119px">Textured</div>
<div class="t" style="left:99px;top:141px">Clear Plastic</div>
<div class="t" style="left:99px;top:163px">Satin Finish</div>
<div class="t" style="left:99px;top:185px">EDM</div>
<div class="t" style="left:99px;top:207px">Patterned</div>
<div class="t" style="left:99px;top:229px">Composite</div>
<div class="t" style="left:99px;top:251px">Mesh</div>
<div class="t" style="left:99px;top:273px">Wax</div>
</div>
<div class="abs" style="left:1903px;top:181px;width:17px;height:280px;background:#f2f2f2"></div>
<div class="abs" style="left:1903px;top:207px;width:17px;height:114px;background:#cdcdcd"></div>
<div class="abs" style="left:1514px;top:172px;width:406px;height:1px;background:#d0d0d0"></div>
<div class="abs" style="left:1515px;top:462px;width:405px;height:5px;background:linear-gradient(180deg,#8d92a8 0%,#c3c7da 45%,#7b819c 80%,#5f6683 100%)"></div>
<div class="abs" style="left:1515px;top:539px;width:405px;height:5px;background:linear-gradient(180deg,#8d92a8 0%,#c3c7da 45%,#7b819c 80%,#5f6683 100%)"></div>
<div class="t" style="left:1519.500px;top:469px">Default Appearance: color</div>
<div class="abs" style="left:1519px;top:484px;width:396px;height:49px;background:#ffff80;border:1px solid #000;box-shadow:0 0 0 0.3px #000"></div>
<div class="t" style="left:1536.500px;top:487px;letter-spacing:-0.32px">Drag and drop appearances onto the model or FeatureManager tree.</div>
<div class="t" style="left:1524.500px;top:502px;letter-spacing:-0.27px">ALT+drag to immediately edit.  Pre-select to apply the appearance to m...</div>
<svg style="left:0;top:0" width="0" height="0"><defs><linearGradient id="tbg" x1="0" y1="0" x2="0" y2="1"><stop offset="0" stop-color="#707070"/><stop offset=".03" stop-color="#a4a4a4"/><stop offset=".1" stop-color="#c6c6c6"/><stop offset=".35" stop-color="#d2d2d2"/><stop offset=".75" stop-color="#dcdcdc"/><stop offset="1" stop-color="#d6d6d6"/></linearGradient></defs></svg>
<div class="abs" style="left:1512px;top:545px;width:391px;height:514px;overflow:hidden">
<svg style="left:23px;top:-91px" width="112" height="112" viewBox="0 0 112 112"><defs><radialGradient id="t23_-91" cx=".37" cy=".33" r=".72"><stop offset="0" stop-color="#cfc9ba"/><stop offset=".4" stop-color="#b9b3a4"/><stop offset="1" stop-color="#7d7a72"/></radialGradient><clipPath id="ct23_-91"><circle cx="56" cy="55.600" r="49.500"/></clipPath></defs><rect width="112" height="112" fill="url(#tbg)"/><path d="M0 16L112 9M0 34l112-12M0 58l112-18M0 90l112-26M24 0L0 44M62 0L16 112M100 0L66 112" stroke="#fff" stroke-width="1.400" opacity=".13"/><ellipse cx="66" cy="100" rx="42" ry="8" fill="#7a7a7a" opacity=".2"/><circle cx="56" cy="55.600" r="49.500" fill="url(#t23_-91)"/><g clip-path="url(#ct23_-91)"><ellipse cx="86.500" cy="37.600" rx="19.500" ry="27.500" transform="rotate(-19 86.500 37.600)" fill="#a09a8c"/></g><ellipse cx="80.600" cy="41.100" rx="13" ry="21" transform="rotate(-17.500 80.600 41.100)" fill="#4a4740"/></svg>
<svg style="left:178px;top:-91px" width="112" height="112" viewBox="0 0 112 112"><defs><radialGradient id="t178_-91" cx=".37" cy=".33" r=".72"><stop offset="0" stop-color="#cacaca"/><stop offset=".4" stop-color="#b4b4b4"/><stop offset="1" stop-color="#787878"/></radialGradient><clipPath id="ct178_-91"><circle cx="56" cy="55.600" r="49.500"/></clipPath></defs><rect width="112" height="112" fill="url(#tbg)"/><path d="M0 16L112 9M0 34l112-12M0 58l112-18M0 90l112-26M24 0L0 44M62 0L16 112M100 0L66 112" stroke="#fff" stroke-width="1.400" opacity=".13"/><ellipse cx="66" cy="100" rx="42" ry="8" fill="#7a7a7a" opacity=".2"/><circle cx="56" cy="55.600" r="49.500" fill="url(#t178_-91)"/><g clip-path="url(#ct178_-91)"><ellipse cx="86.500" cy="37.600" rx="19.500" ry="27.500" transform="rotate(-19 86.500 37.600)" fill="#9c9c9c"/></g><ellipse cx="80.600" cy="41.100" rx="13" ry="21" transform="rotate(-17.500 80.600 41.100)" fill="#484848"/></svg>
<svg style="left:23px;top:64px" width="112" height="112" viewBox="0 0 112 112"><defs><radialGradient id="t23_64" cx=".37" cy=".33" r=".72"><stop offset="0" stop-color="#7b7c7d"/><stop offset=".4" stop-color="#5c5d5e"/><stop offset="1" stop-color="#4a4b4c"/></radialGradient><clipPath id="ct23_64"><circle cx="56" cy="55.600" r="49.500"/></clipPath></defs><rect width="112" height="112" fill="url(#tbg)"/><path d="M0 16L112 9M0 34l112-12M0 58l112-18M0 90l112-26M24 0L0 44M62 0L16 112M100 0L66 112" stroke="#fff" stroke-width="1.400" opacity=".13"/><ellipse cx="66" cy="100" rx="42" ry="8" fill="#7a7a7a" opacity=".2"/><circle cx="56" cy="55.600" r="49.500" fill="url(#t23_64)"/><g clip-path="url(#ct23_64)"><ellipse cx="86.500" cy="37.600" rx="19.500" ry="27.500" transform="rotate(-19 86.500 37.600)" fill="#4c4d4e"/></g><ellipse cx="80.600" cy="41.100" rx="13" ry="21" transform="rotate(-17.500 80.600 41.100)" fill="#101010"/></svg>
<svg style="left:178px;top:64px" width="112" height="112" viewBox="0 0 112 112"><defs><radialGradient id="t178_64" cx=".37" cy=".33" r=".72"><stop offset="0" stop-color="#505152"/><stop offset=".4" stop-color="#333435"/><stop offset="1" stop-color="#262728"/></radialGradient><clipPath id="ct178_64"><circle cx="56" cy="55.600" r="49.500"/></clipPath></defs><rect width="112" height="112" fill="url(#tbg)"/><path d="M0 16L112 9M0 34l112-12M0 58l112-18M0 90l112-26M24 0L0 44M62 0L16 112M100 0L66 112" stroke="#fff" stroke-width="1.400" opacity=".13"/><ellipse cx="66" cy="100" rx="42" ry="8" fill="#7a7a7a" opacity=".2"/><circle cx="56" cy="55.600" r="49.500" fill="url(#t178_64)"/><g clip-path="url(#ct178_64)"><ellipse cx="86.500" cy="37.600" rx="19.500" ry="27.500" transform="rotate(-19 86.500 37.600)" fill="#2a2b2c"/></g><ellipse cx="80.600" cy="41.100" rx="13" ry="21" transform="rotate(-17.500 80.600 41.100)" fill="#050505"/></svg>
<svg style="left:23px;top:219px" width="112" height="112" viewBox="0 0 112 112"><defs><radialGradient id="t23_219" cx=".37" cy=".33" r=".72"><stop offset="0" stop-color="#d96b65"/><stop offset=".4" stop-color="#c44947"/><stop offset="1" stop-color="#983636"/></radialGradient><clipPath id="ct23_219"><circle cx="56" cy="55.600" r="49.500"/></clipPath></defs><rect width="112" height="112" fill="url(#tbg)"/><path d="M0 16L112 9M0 34l112-12M0 58l112-18M0 90l112-26M24 0L0 44M62 0L16 112M100 0L66 112" stroke="#fff" stroke-width="1.400" opacity=".13"/><ellipse cx="66" cy="100" rx="42" ry="8" fill="#7a7a7a" opacity=".2"/><circle cx="56" cy="55.600" r="49.500" fill="url(#t23_219)"/><g clip-path="url(#ct23_219)"><ellipse cx="86.500" cy="37.600" rx="19.500" ry="27.500" transform="rotate(-19 86.500 37.600)" fill="#b24040"/></g><ellipse cx="80.600" cy="41.100" rx="13" ry="21" transform="rotate(-17.500 80.600 41.100)" fill="#6e1816"/></svg>
<svg style="left:178px;top:219px" width="112" height="112" viewBox="0 0 112 112"><defs><radialGradient id="t178_219" cx=".37" cy=".33" r=".72"><stop offset="0" stop-color="#3f6fe0"/><stop offset=".4" stop-color="#2a58cf"/><stop offset="1" stop-color="#2148b4"/></radialGradient><clipPath id="ct178_219"><circle cx="56" cy="55.600" r="49.500"/></clipPath></defs><rect width="112" height="112" fill="url(#tbg)"/><path d="M0 16L112 9M0 34l112-12M0 58l112-18M0 90l112-26M24 0L0 44M62 0L16 112M100 0L66 112" stroke="#fff" stroke-width="1.400" opacity=".13"/><ellipse cx="66" cy="100" rx="42" ry="8" fill="#7a7a7a" opacity=".2"/><circle cx="56" cy="55.600" r="49.500" fill="url(#t178_219)"/><g clip-path="url(#ct178_219)"><ellipse cx="86.500" cy="37.600" rx="19.500" ry="27.500" transform="rotate(-19 86.500 37.600)" fill="#2650c4"/></g><ellipse cx="80.600" cy="41.100" rx="13" ry="21" transform="rotate(-17.500 80.600 41.100)" fill="#0f2490"/></svg>
<svg style="left:23px;top:374px" width="112" height="112" viewBox="0 0 112 112"><defs><radialGradient id="t23_374" cx=".37" cy=".33" r=".72"><stop offset="0" stop-color="#6ed26e"/><stop offset=".4" stop-color="#46b950"/><stop offset="1" stop-color="#32963c"/></radialGradient><clipPath id="ct23_374"><circle cx="56" cy="55.600" r="49.500"/></clipPath></defs><rect width="112" height="112" fill="url(#tbg)"/><path d="M0 16L112 9M0 34l112-12M0 58l112-18M0 90l112-26M24 0L0 44M62 0L16 112M100 0L66 112" stroke="#fff" stroke-width="1.400" opacity=".13"/><ellipse cx="66" cy="100" rx="42" ry="8" fill="#7a7a7a" opacity=".2"/><circle cx="56" cy="55.600" r="49.500" fill="url(#t23_374)"/><g clip-path="url(#ct23_374)"><ellipse cx="86.500" cy="37.600" rx="19.500" ry="27.500" transform="rotate(-19 86.500 37.600)" fill="#3aa644"/></g><ellipse cx="80.600" cy="41.100" rx="13" ry="21" transform="rotate(-17.500 80.600 41.100)" fill="#14641e"/><rect width="112" height="112" fill="#0078d7" opacity=".58"/></svg>
<svg style="left:178px;top:374px" width="112" height="112" viewBox="0 0 112 112"><defs><radialGradient id="t178_374" cx=".37" cy=".33" r=".72"><stop offset="0" stop-color="#f0ee6a"/><stop offset=".4" stop-color="#e3e04a"/><stop offset="1" stop-color="#c8c63a"/></radialGradient><clipPath id="ct178_374"><circle cx="56" cy="55.600" r="49.500"/></clipPath></defs><rect width="112" height="112" fill="url(#tbg)"/><path d="M0 16L112 9M0 34l112-12M0 58l112-18M0 90l112-26M24 0L0 44M62 0L16 112M100 0L66 112" stroke="#fff" stroke-width="1.400" opacity=".13"/><ellipse cx="66" cy="100" rx="42" ry="8" fill="#7a7a7a" opacity=".2"/><circle cx="56" cy="55.600" r="49.500" fill="url(#t178_374)"/><g clip-path="url(#ct178_374)"><ellipse cx="86.500" cy="37.600" rx="19.500" ry="27.500" transform="rotate(-19 86.500 37.600)" fill="#d4d240"/></g><ellipse cx="80.600" cy="41.100" rx="13" ry="21" transform="rotate(-17.500 80.600 41.100)" fill="#7f7d1a"/></svg>
<div class="t" style="left:79px;top:24px;transform:translateX(-50%);letter-spacing:-0.2px">beige soft touch plastic</div>
<div class="t" style="left:234px;top:24px;transform:translateX(-50%);letter-spacing:-0.2px">light grey soft touch plastic</div>
<div class="t" style="left:79px;top:179px;transform:translateX(-50%);letter-spacing:-0.2px">dark grey soft touch plastic</div>
<div class="t" style="left:234px;top:179px;transform:translateX(-50%);letter-spacing:-0.2px">black soft touch plastic</div>
<div class="t" style="left:79px;top:334px;transform:translateX(-50%);letter-spacing:-0.2px">red soft touch plastic</div>
<div class="t" style="left:234px;top:334px;transform:translateX(-50%);letter-spacing:-0.2px">blue soft touch plastic</div>
<div class="t" style="left:234px;top:489px;transform:translateX(-50%);letter-spacing:-0.2px">yellow soft touch plastic</div>
<div class="abs" style="left:15px;top:489px;width:128px;height:16px;background:#0078d7"></div>
<div class="t" style="left:79px;top:489px;transform:translateX(-50%);letter-spacing:-0.2px;color:#fff">green soft touch plastic</div>
</div>
<div class="abs" style="left:1904px;top:545px;width:16px;height:514px;background:#f2f2f2"></div>
<div class="abs" style="left:1904px;top:717px;width:16px;height:316px;background:#cdcdcd"></div>
<svg style="left:1480px;top:117px" width="440" height="943" viewBox="1480 117 440 943"><g stroke-linejoin="round">
<path d="M1520 123l4.500 4.500-4.500 4.500M1526 123l4.500 4.500-4.500 4.500" fill="none" stroke="#111" stroke-width="1.800"/>
<g transform="translate(1887 127.500)" fill="none" stroke="#222"><circle r="5" stroke-width="1.300"/><circle r="2" stroke-width="1.100"/><circle r="6.400" stroke-width="2" stroke-dasharray="2.300 2.730"/></g>
<g transform="translate(1907 127.500) rotate(45)"><path d="M-3-7h6l-1 2v4l2.500 2v1.500h-9V1L-2-1v-4z" fill="#222"/><path d="M0 2.500v6" stroke="#222" stroke-width="1.300"/></g>
<g transform="translate(1529 155)"><circle r="7.500" fill="#fff" stroke="#333" stroke-width="1.100"/><path d="M-5 0l4.500-4v2.500h5v3h-5V4z" fill="#2a7fb5" stroke="#1c4f74" stroke-width=".7"/></g>
<g transform="translate(1555.500 155)" opacity=".5"><circle r="7.500" fill="#fff" stroke="#bbb" stroke-width="1.100"/><path d="M5 0l-4.500-4v2.500h-5v3h5V4z" fill="#ccc" stroke="#bbb" stroke-width=".7"/></g>
<path d="M1575 153.500h6l-3 3.200z" fill="#222"/>
<g transform="translate(1598 153)"><circle r="8.300" fill="#e23a2a"/><path d="M0 0L-8.300 0A8.300 8.300 0 0 1 -2 -8.050z" fill="#2b6fd0"/><path d="M0 0L-8.300 0A8.300 8.300 0 0 0 -1 8.200z" fill="#3aa83a"/><path d="M0 0L-1 8.200A8.300 8.300 0 0 0 8.200 1z" fill="#e8e8e8"/><ellipse cx="-3" cy="-4" rx="3.300" ry="2" fill="#fff" opacity=".45"/><path d="M-2 9L7 0l3 3L1 12l-4 1z" fill="#f2c522" stroke="#7a5e00" stroke-width=".8"/><path d="M7 0l1.500-1.500 3 3L10 3z" fill="#e07070" stroke="#7a3030" stroke-width=".7"/></g>
<g transform="translate(1618 146)" opacity=".45" fill="#ececec" stroke="#aaa"><path d="M3 4l3-2.500 3 2.500v11l-3 2.500-3-2.500zM7 4l3-2.500 3 2.500v11l-3 2.500-3-2.500zM11 4l3-2.500 3 2.500v11l-3 2.500-3-2.500z"/></g>
<g transform="translate(1644 146)" opacity=".45" fill="#ececec" stroke="#aaa"><path d="M1 16.500V4h5l1.500 2H15v3"/><path d="M1 16.500L4.500 9h14L15 16.500z"/><path d="M5 1v4M3 3h4" stroke="#bbb"/></g>
<g transform="translate(1679.500 155)"><path d="M-7.500 -1.500A7.500 7.500 0 0 1 5.500 -5l2-2v6.500H1l2.300-2.300A4.500 4.500 0 0 0 -4.300 -1.500z" fill="#2a8ac8" stroke="#1c4f74" stroke-width=".8"/><path d="M7.500 1.500A7.500 7.500 0 0 1 -5.500 5l-2 2V.500H-1l-2.300 2.300A4.500 4.500 0 0 0 4.300 1.500z" fill="#2a8ac8" stroke="#1c4f74" stroke-width=".8"/></g>
<g transform="translate(1707 155)"><path d="M0-8l5.500 6H2V8h-4V-2H-5.500z" fill="#3f95c8" stroke="#1c4f74" stroke-width="1"/></g>
<path d="M1907 192.500l4.500-4.500 4.500 4.500M1907 450l4.500 4.500 4.500-4.500M1907 556.500l4.500-4.500 4.500 4.500M1907 1042l4.500 4.500 4.500-4.500" fill="none" stroke="#444" stroke-width="1.700"/>
<path d="M1707 543.500l2.800-3 2.800 3zM1715 543.500l2.800-3 2.800 3zM1723 543.500l2.800-3 2.800 3z" fill="#111"/>
<rect x="1484.500" y="167.500" width="26" height="24" fill="#d3d3d3" stroke="#8c8c8c"/>
<rect x="1484.500" y="191.500" width="26" height="24" fill="#d3d3d3" stroke="#8c8c8c"/>
<rect x="1484.500" y="215.500" width="26" height="24" fill="#d3d3d3" stroke="#8c8c8c"/>
<rect x="1484.500" y="239.500" width="26" height="24" fill="#d3d3d3" stroke="#8c8c8c"/>
<rect x="1484.500" y="263.500" width="27" height="24" fill="#f7f7f7" stroke="#8c8c8c"/>
<rect x="1484.500" y="287.500" width="26" height="24" fill="#d3d3d3" stroke="#8c8c8c"/>
<rect x="1484.500" y="311.500" width="26" height="24" fill="#d3d3d3" stroke="#8c8c8c"/>
<rect x="1510" y="264" width="2" height="22" fill="#f7f7f7"/>
<g transform="translate(1488 170)"><path d="M.800 9L9 1.200 17.200 9" fill="none" stroke="#1f5f8f" stroke-width="2"/><path d="M3 8.500V17h12V8.500L9 3z" fill="#fff" stroke="#333" stroke-width="1"/><rect x="7" y="10.500" width="4" height="6.500" fill="#fff" stroke="#333"/></g>
<g transform="translate(1488 193)" fill="#f4f4f4" stroke="#333" stroke-width="1"><path d="M1.500 4.500l3-2.500 3 2.500v11l-3 2.500-3-2.500zM5.500 4.500l3-2.500 3 2.500v11l-3 2.500-3-2.500zM9.500 4.500l3-2.500 3 2.500v11l-3 2.500-3-2.500z"/></g>
<g transform="translate(1487 218)" fill="#f4f4f4" stroke="#333" stroke-width="1.100"><path d="M1 16.500V2.500h5.500l1.500 2H16v3"/><path d="M1 16.500L5 7.500h15l-4.500 9z"/></g>
<g transform="translate(1488 243)"><rect x=".600" y=".600" width="17" height="16" fill="#fff" stroke="#333" stroke-width="1.100"/><path d="M3 3h7v2.500H8v4h2V12H3V9.500h2v-4H3z" fill="#f2c522" stroke="#7a5e00" stroke-width=".7"/><rect x="12" y="3" width="3.500" height="3" fill="#f2c522" stroke="#7a5e00" stroke-width=".6"/><rect x="12" y="8.500" width="3.500" height="3" fill="#f2c522" stroke="#7a5e00" stroke-width=".6"/><path d="M3 14.500h12" stroke="#333"/></g>
<g transform="translate(1497 275)"><circle r="8.300" fill="#e23a2a"/><path d="M0 0L-8.300 0A8.300 8.300 0 0 1 -2 -8.050z" fill="#2b6fd0"/><path d="M0 0L-8.300 0A8.300 8.300 0 0 0 -1 8.200z" fill="#3aa83a"/><path d="M0 0L-1 8.200A8.300 8.300 0 0 0 8.200 1z" fill="#f2c522"/><ellipse cx="-3" cy="-4" rx="3.300" ry="2" fill="#fff" opacity=".4"/></g>
<g transform="translate(1488 290)"><rect x=".600" y=".600" width="17" height="17" fill="#fff" stroke="#333" stroke-width="1.200"/><rect x=".600" y=".600" width="17" height="3" fill="#3f95c8" stroke="#1c4f74" stroke-width=".8"/><rect x="2.500" y="5.500" width="3.500" height="2.500" fill="#3f95c8"/><rect x="2.500" y="9.500" width="3.500" height="2.500" fill="#3f95c8"/><rect x="2.500" y="13.500" width="3.500" height="2.500" fill="#3f95c8"/><path d="M7.500 6.700h8M7.500 10.700h8M7.500 14.700h8" stroke="#333" stroke-width="1.100"/></g>
<g transform="translate(1488 314)"><rect x=".600" y=".600" width="14" height="11" fill="#fff" stroke="#333" stroke-width="1.100"/><rect x=".600" y=".600" width="14" height="2.600" fill="#3f95c8" stroke="#1c4f74" stroke-width=".7"/><path d="M2.500 6h7M2.500 8.500h5" stroke="#333"/><path d="M7 12l3.500-2V8l3-1 3 1v3l2.500 1.500v3L13 18.500 7 15z" fill="#f2c522" stroke="#7a5e00" stroke-width=".8"/></g>
</g></svg>
<!-- ===== context popup toolbar + annotation arrow ===== -->
<div class="abs" style="left:1011px;top:609px;width:192px;height:38px;background:#f7f7f7;border:1px solid #d9d9d9"></div>
<svg style="left:1000px;top:595px" width="640" height="400" viewBox="1000 595 640 400">
<defs><linearGradient id="pb1" x1="0" y1="0" x2="1" y2="1"><stop offset="0" stop-color="#a8d8f0"/><stop offset="1" stop-color="#2f86bc"/></linearGradient></defs>
<g stroke-linejoin="round">
<rect x="1023.500" y="621.500" width="16" height="13" fill="url(#pb1)" stroke="#1c4f74"/>
<!-- move/copy -->
<g transform="translate(1051 618)"><path d="M1 5.500l4.500-3 6 1.500-1.500 4L5 10z" fill="#f6f6f6" stroke="#333" stroke-width=".9"/><path d="M8 12l4.500-3 6 2-2 4-5 2z" fill="#4a9fd0" stroke="#1c4f74" stroke-width=".9"/><path d="M9.500 1c3-.500 5.500 1 6 4" fill="none" stroke="#222" stroke-width="1.500"/><path d="M17.500 3.500l-2 3.500-2.500-3z" fill="#222"/><path d="M2.500 11l3.500 4" stroke="#222" stroke-width="1.600"/><path d="M7.500 17.500l-5-.500 3.500-3.500z" fill="#222"/></g>
<!-- cube -->
<g transform="translate(1084 619.500)"><path d="M.800 4l6-3 7 2v9l-6 4.500-7-2.500z" fill="#4a9fd0" stroke="#1c4f74"/><path d="M.800 4l7 2.500 6-3.500M7.800 6.500v10" fill="none" stroke="#1c4f74"/><path d="M.800 4l6-3 7 2-6 3.500z" fill="#a8d8f0" stroke="#1c4f74"/></g>
<!-- part -->
<g transform="translate(1112 619)"><path d="M1 7l3.500-2.500V2l3-1.500 3.500 1.500v4.500L16.500 9v5l-6 4L1 12z" fill="#f2c522" stroke="#5a4500" stroke-width="1"/><path d="M1 7l9.500 6 6-4M10.500 13v5M4.500 4.500l3 1.500 3.500-1.500M7.500 6v5" fill="none" stroke="#5a4500" stroke-width=".8"/></g>
<!-- appearance -->
<g transform="translate(1150 629)"><circle r="7.500" fill="#e23a2a"/><path d="M0 0L-7.500 0A7.500 7.500 0 0 1 -1.800 -7.280z" fill="#2b6fd0"/><path d="M0 0L-7.500 0A7.500 7.500 0 0 0 -1 7.430z" fill="#3aa83a"/><path d="M0 0L-1 7.430A7.500 7.500 0 0 0 7.430 1z" fill="#f2c522"/><ellipse cx="-3" cy="-3.500" rx="3" ry="1.800" fill="#fff" opacity=".45"/><path d="M2-9.500h7l-2 3c1 1.500.500 3.500-.500 5-1-2-2-3-3.500-3.500z" fill="#333"/></g>
<!-- pin -->
<g transform="translate(1172 623)" fill="#9a9a9a"><path d="M0 4.300h7v1.200H0z"/><path d="M7 1.500l2 1.500h3V1l1.500-1v10L12 9V7H9L7 8.500z"/></g>
</g>
<!-- orange highlight frame -->
<rect x="1041" y="607.500" width="38" height="40.500" rx="3" fill="none" stroke="#ff7f27" stroke-width="10"/>
<!-- orange arrow -->
<path d="M1055.700 725.500L1129.800 722.700L1117.300 736.600L1603.200 962.750L1600.300 966.200L1105.300 763.400L1104.800 778.700Z" fill="#ff7f27"/>
</svg>
</body>
</html>
